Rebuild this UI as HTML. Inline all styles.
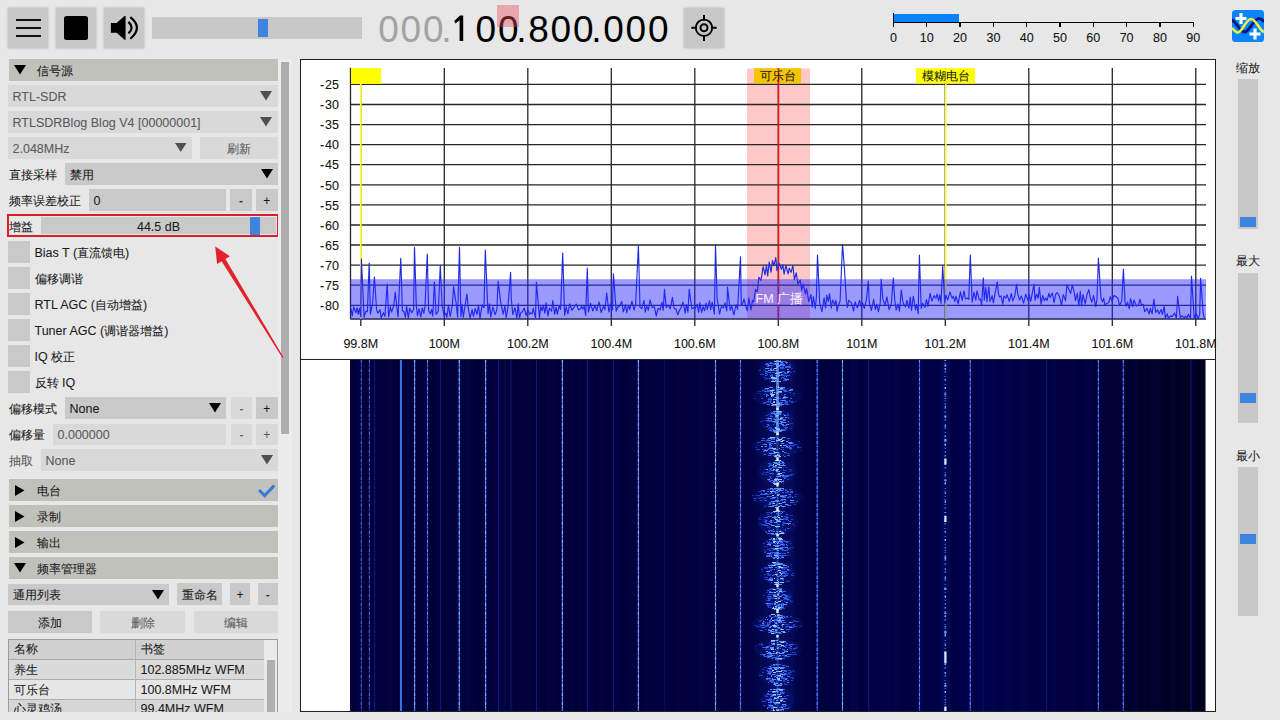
<!DOCTYPE html>
<html><head><meta charset="utf-8"><style>
html,body{margin:0;padding:0;width:1280px;height:720px;overflow:hidden;background:#e7e7e7;}
body{position:relative;font-family:"Liberation Sans",sans-serif;}
body>div,body>svg{position:absolute;}
.t{white-space:nowrap;line-height:15px;-webkit-text-stroke:0.08px currentColor;}
.c{font-size:12px;font-weight:500;}
.dg{top:9.5px;font-size:37px;line-height:40px;}
</style></head><body>
<div style="left:8px;top:8px;width:40px;height:40px;background:#c8c8c8;border-radius:2px;box-shadow:0 0 2px 1px #cfcfcf"></div><div style="left:56px;top:8px;width:40px;height:40px;background:#c8c8c8;border-radius:2px;box-shadow:0 0 2px 1px #cfcfcf"></div><div style="left:104px;top:8px;width:40px;height:40px;background:#c8c8c8;border-radius:2px;box-shadow:0 0 2px 1px #cfcfcf"></div><div style="left:15.5px;top:18.5px;width:25px;height:2px;background:#111;"></div><div style="left:15.5px;top:26.5px;width:25px;height:2px;background:#111;"></div><div style="left:15.5px;top:35px;width:25px;height:2px;background:#111;"></div><div style="left:64px;top:16px;width:24px;height:24px;background:#000;border-radius:2.5px"></div><svg style="left:104px;top:8px" width="40" height="40"><path d="M6.9 15.1H12.6L20.5 7.9H21.6V31.7H20.5L12.6 24.8H6.9Z" fill="#000"/><path d="M24.4 13.9Q30.8 19.6 24.4 25.4" stroke="#000" stroke-width="2.2" fill="none"/><path d="M26.3 9.2Q39.5 19.6 26.3 30.75" stroke="#000" stroke-width="2.2" fill="none"/></svg><div style="left:152px;top:17px;width:210px;height:21.5px;background:#c8c8c8;"></div><div style="left:258px;top:18.75px;width:10px;height:18.25px;background:#3d84de;"></div><div class="dg" style="left:378.2px;color:#a3a3a3">0</div><div class="dg" style="left:400.6px;color:#a3a3a3">0</div><div class="dg" style="left:423.0px;color:#a3a3a3">0</div><div class="dg" style="left:441.2px;color:#a3a3a3">.</div><svg style="left:450px;top:10px" width="20" height="36"><path d="M10 5.6H13.2V31H9.6V10.2L5.4 13.6L4.2 11.1Z" fill="#000"/></svg><div class="dg" style="left:475.6px;color:#000">0</div><div class="dg" style="left:498.0px;color:#000">0</div><div class="dg" style="left:516.2px;color:#000">.</div><div class="dg" style="left:528.2px;color:#000">8</div><div class="dg" style="left:550.6px;color:#000">0</div><div class="dg" style="left:573.0px;color:#000">0</div><div class="dg" style="left:591.2px;color:#000">.</div><div class="dg" style="left:603.2px;color:#000">0</div><div class="dg" style="left:625.6px;color:#000">0</div><div class="dg" style="left:648.0px;color:#000">0</div><div style="left:497px;top:5.1px;width:22px;height:21.5px;background:rgba(236,70,90,0.40);"></div><div style="left:684px;top:8px;width:40px;height:40px;background:#c8c8c8;border-radius:2px;box-shadow:0 0 2px 1px #cfcfcf"></div><svg style="left:684px;top:8px" width="40" height="40"><circle cx="20" cy="19.8" r="8.2" stroke="#000" stroke-width="1.9" fill="none"/><circle cx="20" cy="19.8" r="3.5" stroke="#000" stroke-width="2" fill="none"/><path d="M20 7V12.5M20 27.2V33M7.3 19.8H12.8M27.2 19.8H32.7" stroke="#000" stroke-width="2"/></svg><div style="left:893.4px;top:14px;width:65.6px;height:8px;background:#0a82ff;"></div><div style="left:893px;top:22px;width:300.5px;height:1.3px;background:#000;"></div><div style="left:892.8px;top:22px;width:1.3px;height:4.7px;background:#000;"></div><div class="t" style="left:863.4px;top:31px;width:60px;text-align:center;color:#111;font-size:12.5px">0</div><div style="left:926.12px;top:22px;width:1.3px;height:4.7px;background:#000;"></div><div class="t" style="left:896.7px;top:31px;width:60px;text-align:center;color:#111;font-size:12.5px">10</div><div style="left:959.4399999999999px;top:22px;width:1.3px;height:4.7px;background:#000;"></div><div class="t" style="left:930.0px;top:31px;width:60px;text-align:center;color:#111;font-size:12.5px">20</div><div style="left:992.76px;top:22px;width:1.3px;height:4.7px;background:#000;"></div><div class="t" style="left:963.4px;top:31px;width:60px;text-align:center;color:#111;font-size:12.5px">30</div><div style="left:1026.0800000000002px;top:22px;width:1.3px;height:4.7px;background:#000;"></div><div class="t" style="left:996.7px;top:31px;width:60px;text-align:center;color:#111;font-size:12.5px">40</div><div style="left:1059.4px;top:22px;width:1.3px;height:4.7px;background:#000;"></div><div class="t" style="left:1030.0px;top:31px;width:60px;text-align:center;color:#111;font-size:12.5px">50</div><div style="left:1092.72px;top:22px;width:1.3px;height:4.7px;background:#000;"></div><div class="t" style="left:1063.3px;top:31px;width:60px;text-align:center;color:#111;font-size:12.5px">60</div><div style="left:1126.04px;top:22px;width:1.3px;height:4.7px;background:#000;"></div><div class="t" style="left:1096.6px;top:31px;width:60px;text-align:center;color:#111;font-size:12.5px">70</div><div style="left:1159.3600000000001px;top:22px;width:1.3px;height:4.7px;background:#000;"></div><div class="t" style="left:1130.0px;top:31px;width:60px;text-align:center;color:#111;font-size:12.5px">80</div><div style="left:1192.68px;top:22px;width:1.3px;height:4.7px;background:#000;"></div><div class="t" style="left:1163.3px;top:31px;width:60px;text-align:center;color:#111;font-size:12.5px">90</div><div style="left:893px;top:13.4px;width:1.3px;height:9px;background:#000;"></div><svg style="left:1232px;top:10px" width="32" height="32"><rect width="32" height="32" rx="3.5" fill="#0a84ff"/><path d="M0 9.5C4 12 8 22 12.5 22C17 22 22 8.5 27 8.5C29.5 8.5 31 10.5 32 12" stroke="#071a7a" stroke-width="3" fill="none"/><path d="M0 18C2 20 4 22.5 6 22.5C10 22.5 14 9 19 9C24 9 27 20 32 22" stroke="#eeee44" stroke-width="2.6" fill="none"/><path d="M9 3V14M3.5 8.5H14.5M23 18.5V29.5M17.5 24H28.5" stroke="#fff" stroke-width="3.2"/></svg><div style="left:9px;top:59px;width:268.5px;height:22px;background:#c1c1bb;"></div><svg style="left:14px;top:65px" width="12" height="9.5"><path d="M0 0H12L6.0 9.5Z" fill="#000"/></svg><div class="t" style="left:37px;top:63.5px;color:#1b1b1b;font-size:12.5px;"><span class="c">信号源</span></div><div style="left:8px;top:85px;width:269.5px;height:22px;background:#d9d9d9;"></div><div class="t" style="left:12.5px;top:89.5px;color:#5a5a5a;font-size:12.5px;">RTL-SDR</div><svg style="left:260px;top:91px" width="12" height="9.5"><path d="M0 0H12L6.0 9.5Z" fill="#505050"/></svg><div style="left:8px;top:111px;width:269.5px;height:22px;background:#d9d9d9;"></div><div class="t" style="left:12.5px;top:115.5px;color:#5a5a5a;font-size:12.5px;">RTLSDRBlog Blog V4 [00000001]</div><svg style="left:260px;top:117px" width="12" height="9.5"><path d="M0 0H12L6.0 9.5Z" fill="#505050"/></svg><div style="left:8px;top:137px;width:184px;height:21.5px;background:#d9d9d9;"></div><div class="t" style="left:12.5px;top:141.5px;color:#5a5a5a;font-size:12.5px;">2.048MHz</div><svg style="left:175px;top:143px" width="11.5" height="9"><path d="M0 0H11.5L5.75 9Z" fill="#505050"/></svg><div style="left:200px;top:137px;width:77.5px;height:21.5px;background:#d9d9d9;"></div><div class="t" style="left:200px;top:141.5px;color:#5a5a5a;font-size:12.5px;width:77.5px;text-align:center"><span class="c">刷新</span></div><div class="t" style="left:9px;top:167.5px;color:#1b1b1b;font-size:12.5px;"><span class="c">直接采样</span></div><div style="left:65px;top:163px;width:212.5px;height:21.5px;background:#c9c9c9;"></div><div class="t" style="left:69.5px;top:167.5px;color:#1b1b1b;font-size:12.5px;"><span class="c">禁用</span></div><svg style="left:261px;top:169px" width="12" height="9.5"><path d="M0 0H12L6.0 9.5Z" fill="#000"/></svg><div class="t" style="left:9px;top:193.5px;color:#1b1b1b;font-size:12.5px;"><span class="c">频率误差校正</span></div><div style="left:89px;top:189px;width:137px;height:21.5px;background:#c9c9c9;"></div><div class="t" style="left:93.5px;top:193.5px;color:#1b1b1b;font-size:12.5px;">0</div><div style="left:230px;top:189px;width:22px;height:21.5px;background:#c9c9c9;"></div><div class="t" style="left:230px;top:193.5px;color:#1b1b1b;font-size:12px;width:22px;text-align:center">-</div><div style="left:256px;top:189px;width:21.5px;height:21.5px;background:#c9c9c9;"></div><div class="t" style="left:256px;top:193.5px;color:#1b1b1b;font-size:12px;width:21.5px;text-align:center">+</div><div style="left:41px;top:216.5px;width:235px;height:17px;background:#c9c9c9;"></div><div style="left:250px;top:216.9px;width:10px;height:18px;background:#3d84de;"></div><div class="t" style="left:41px;top:220.0px;color:#1b1b1b;font-size:12.5px;width:235px;text-align:center">44.5 dB</div><div class="t" style="left:8.5px;top:220.0px;color:#1b1b1b;font-size:12.5px;"><span class="c">增益</span></div><div style="left:7px;top:214px;width:268px;height:19px;border:2px solid #db1f2a"></div><div style="left:8px;top:241px;width:22px;height:22px;background:#c9c9c9;"></div><div class="t" style="left:34.5px;top:245.5px;color:#1b1b1b;font-size:12.5px;">Bias T (<span class="c">直流馈电</span>)</div><div style="left:8px;top:267px;width:22px;height:22px;background:#c9c9c9;"></div><div class="t" style="left:34.5px;top:271.5px;color:#1b1b1b;font-size:12.5px;"><span class="c">偏移调谐</span></div><div style="left:8px;top:293px;width:22px;height:22px;background:#c9c9c9;"></div><div class="t" style="left:34.5px;top:297.5px;color:#1b1b1b;font-size:12.5px;">RTL AGC (<span class="c">自动增益</span>)</div><div style="left:8px;top:319px;width:22px;height:22px;background:#c9c9c9;"></div><div class="t" style="left:34.5px;top:323.5px;color:#1b1b1b;font-size:12.5px;">Tuner AGC (<span class="c">调谐器增益</span>)</div><div style="left:8px;top:345px;width:22px;height:22px;background:#c9c9c9;"></div><div class="t" style="left:34.5px;top:349.5px;color:#1b1b1b;font-size:12.5px;">IQ <span class="c">校正</span></div><div style="left:8px;top:371px;width:22px;height:22px;background:#c9c9c9;"></div><div class="t" style="left:34.5px;top:375.5px;color:#1b1b1b;font-size:12.5px;"><span class="c">反转</span> IQ</div><div class="t" style="left:9px;top:401.5px;color:#1b1b1b;font-size:12.5px;"><span class="c">偏移模式</span></div><div style="left:65px;top:397px;width:161px;height:21.5px;background:#c9c9c9;"></div><div class="t" style="left:69.5px;top:401.5px;color:#1b1b1b;font-size:12.5px;">None</div><svg style="left:209px;top:403px" width="12" height="9.5"><path d="M0 0H12L6.0 9.5Z" fill="#000"/></svg><div style="left:231px;top:397px;width:21px;height:21.5px;background:#d9d9d9;"></div><div class="t" style="left:231px;top:401.5px;color:#5a5a5a;font-size:12px;width:21px;text-align:center">-</div><div style="left:256px;top:397px;width:21.5px;height:21.5px;background:#c9c9c9;"></div><div class="t" style="left:256px;top:401.5px;color:#1b1b1b;font-size:12px;width:21.5px;text-align:center">+</div><div class="t" style="left:9px;top:427.5px;color:#1b1b1b;font-size:12.5px;"><span class="c">偏移量</span></div><div style="left:53px;top:423.5px;width:173px;height:21px;background:#d9d9d9;"></div><div class="t" style="left:57.5px;top:428.0px;color:#5a5a5a;font-size:12.5px;">0.000000</div><div style="left:231px;top:423.5px;width:21px;height:21px;background:#d9d9d9;"></div><div class="t" style="left:231px;top:428.0px;color:#5a5a5a;font-size:12px;width:21px;text-align:center">-</div><div style="left:256px;top:423.5px;width:21.5px;height:21px;background:#d9d9d9;"></div><div class="t" style="left:256px;top:428.0px;color:#5a5a5a;font-size:12px;width:21.5px;text-align:center">+</div><div class="t" style="left:9px;top:453.5px;color:#5a5a5a;font-size:12.5px;"><span class="c">抽取</span></div><div style="left:41px;top:449.4px;width:236.5px;height:21.2px;background:#d9d9d9;"></div><div class="t" style="left:45.5px;top:453.5px;color:#5a5a5a;font-size:12.5px;">None</div><svg style="left:261px;top:455px" width="12" height="9.5"><path d="M0 0H12L6.0 9.5Z" fill="#505050"/></svg><div style="left:9px;top:479px;width:268.5px;height:22px;background:#c1c1bb;"></div><svg style="left:15px;top:484.5px" width="9.5" height="11"><path d="M0 0L9.5 5.5L0 11Z" fill="#000"/></svg><div class="t" style="left:37px;top:483.5px;color:#1b1b1b;font-size:12.5px;"><span class="c">电台</span></div><svg style="left:256px;top:483px" width="20" height="16"><path d="M3 7L8.6 12.6L18.3 2.5" stroke="#3a78d8" stroke-width="3" fill="none"/></svg><div style="left:9px;top:505px;width:268.5px;height:22px;background:#c1c1bb;"></div><svg style="left:15px;top:510.5px" width="9.5" height="11"><path d="M0 0L9.5 5.5L0 11Z" fill="#000"/></svg><div class="t" style="left:37px;top:509.5px;color:#1b1b1b;font-size:12.5px;"><span class="c">录制</span></div><div style="left:9px;top:531px;width:268.5px;height:22px;background:#c1c1bb;"></div><svg style="left:15px;top:536.5px" width="9.5" height="11"><path d="M0 0L9.5 5.5L0 11Z" fill="#000"/></svg><div class="t" style="left:37px;top:535.5px;color:#1b1b1b;font-size:12.5px;"><span class="c">输出</span></div><div style="left:9px;top:557px;width:268.5px;height:22px;background:#c1c1bb;"></div><svg style="left:14px;top:563px" width="12" height="9.5"><path d="M0 0H12L6.0 9.5Z" fill="#000"/></svg><div class="t" style="left:37px;top:561.5px;color:#1b1b1b;font-size:12.5px;"><span class="c">频率管理器</span></div><div style="left:8px;top:583.5px;width:160.75px;height:21px;background:#c9c9c9;"></div><div class="t" style="left:12.5px;top:588.0px;color:#1b1b1b;font-size:12.5px;"><span class="c">通用列表</span></div><svg style="left:152px;top:590px" width="12" height="9.5"><path d="M0 0H12L6.0 9.5Z" fill="#000"/></svg><div style="left:177px;top:583px;width:45px;height:21.5px;background:#c9c9c9;"></div><div class="t" style="left:177px;top:587.5px;color:#1b1b1b;font-size:12.5px;width:45px;text-align:center"><span class="c">重命名</span></div><div style="left:230px;top:583px;width:20px;height:21.5px;background:#c9c9c9;"></div><div class="t" style="left:230px;top:587.5px;color:#1b1b1b;font-size:12px;width:20px;text-align:center">+</div><div style="left:258px;top:583px;width:19.5px;height:21.5px;background:#c9c9c9;"></div><div class="t" style="left:258px;top:587.5px;color:#1b1b1b;font-size:12px;width:19.5px;text-align:center">-</div><div style="left:8px;top:611px;width:84px;height:21.5px;background:#c9c9c9;"></div><div class="t" style="left:8px;top:615.5px;color:#1b1b1b;font-size:12.5px;width:84px;text-align:center"><span class="c">添加</span></div><div style="left:100px;top:611px;width:85px;height:21.5px;background:#d9d9d9;"></div><div class="t" style="left:100px;top:615.5px;color:#5a5a5a;font-size:12.5px;width:85px;text-align:center"><span class="c">删除</span></div><div style="left:193.75px;top:611px;width:83.75px;height:21.5px;background:#d9d9d9;"></div><div class="t" style="left:193.75px;top:615.5px;color:#5a5a5a;font-size:12.5px;width:83.75px;text-align:center"><span class="c">编辑</span></div><div style="left:8px;top:639px;width:269.5px;height:73px;background:#e9e9e9;box-sizing:border-box;border:1px solid #9c9c9c;border-bottom:none"></div><div style="left:9px;top:640px;width:255px;height:19.5px;background:#d0d0d0;"></div><div style="left:9px;top:659.5px;width:255px;height:20px;background:#dadada;"></div><div style="left:9px;top:679.5px;width:255px;height:19.5px;background:#e6e6e6;"></div><div style="left:9px;top:699px;width:255px;height:13px;background:#d6d6d6;"></div><div style="left:9px;top:659.0px;width:255px;height:1px;background:#adadad;"></div><div style="left:9px;top:679.0px;width:255px;height:1px;background:#adadad;"></div><div style="left:9px;top:698.5px;width:255px;height:1px;background:#adadad;"></div><div style="left:134.5px;top:640px;width:1px;height:72px;background:#b5b5b5;"></div><div style="left:267px;top:660px;width:8px;height:52px;background:#b0b0b0;"></div><div class="t" style="left:14px;top:642.0px;color:#1b1b1b;font-size:12.5px;"><span class="c">名称</span></div><div class="t" style="left:140.5px;top:642.0px;color:#1b1b1b;font-size:12.5px;"><span class="c">书签</span></div><div class="t" style="left:14px;top:662.5px;color:#1b1b1b;font-size:12.5px;"><span class="c">养生</span></div><div class="t" style="left:140.5px;top:662.5px;color:#1b1b1b;font-size:12.5px;">102.885MHz WFM</div><div class="t" style="left:14px;top:682.5px;color:#1b1b1b;font-size:12.5px;"><span class="c">可乐台</span></div><div class="t" style="left:140.5px;top:682.5px;color:#1b1b1b;font-size:12.5px;">100.8MHz WFM</div><div class="t" style="left:14px;top:702.0px;color:#1b1b1b;font-size:12.5px;height:9.5px;overflow:hidden"><span class="c">心灵鸡汤</span></div><div class="t" style="left:140.5px;top:702.0px;color:#1b1b1b;font-size:12.5px;height:9.5px;overflow:hidden">99.4MHz WFM</div><div style="left:278px;top:59px;width:14px;height:653px;background:#ececec;"></div><div style="left:281px;top:62px;width:8px;height:372px;background:#aeaeae;"></div><svg style="left:0;top:0" width="300" height="380"><path d="M215.2 246.5L229.9 256.2L225.4 259.0L283.5 357.2L282.5 357.9L221.6 261.2L217.1 264.0Z" fill="#e4222b"/></svg><div style="left:300px;top:59px;width:914px;height:651px;border:1px solid #1e1e1e;background:#fff"></div><svg style="left:0;top:0" width="1280" height="720"><rect x="747" y="68.5" width="63" height="250.5" fill="#ffc8c8"/><path d="M350.5 84.4H1206M350.5 104.5H1206M350.5 124.6H1206M350.5 144.6H1206M350.5 164.7H1206M350.5 184.8H1206M350.5 204.9H1206M350.5 225.0H1206M350.5 245.0H1206M350.5 265.1H1206M350.5 285.2H1206M350.5 305.3H1206M360.8 68V326M444.3 68V326M527.8 68V326M611.3 68V326M694.8 68V326M778.3 68V326M861.8 68V326M945.3 68V326M1028.8 68V326M1112.3 68V326M1195.8 68V326M350.5 67.8V319.3M350.5 319H1206" stroke="#262626" stroke-width="1.3" fill="none"/><rect x="351.2" y="68" width="30" height="16" fill="#ffff00"/><path d="M360.8 84V319" stroke="#ffff30" stroke-width="1.8"/><path d="M945.8 83.4V319" stroke="#ffff30" stroke-width="1.6"/><path d="M778.5 68V319" stroke="#e41a1a" stroke-width="1.5"/><rect x="754" y="68.2" width="47" height="15.2" fill="#f7c400"/><rect x="916" y="68.2" width="59" height="15.2" fill="#ffff00"/><path d="M778.5 68V84" stroke="#e41a1a" stroke-width="1.5"/><polyline points="351.0,308.4 352.2,316.0 353.7,306.9 355.9,312.7 357.1,307.7 358.3,314.3 359.5,308.4 360.7,316.5 361.4,259.1 364.1,317.1 365.9,311.1 367.4,311.8 369.2,263.0 370.4,314.1 372.6,303.6 374.4,277.0 376.6,309.9 377.8,313.2 380.0,309.6 381.2,317.8 383.4,312.7 384.9,316.4 387.2,284.0 388.6,317.0 390.4,306.9 391.6,312.1 393.8,305.5 395.3,292.0 396.8,307.4 398.0,316.6 400.8,258.3 402.4,310.7 403.9,311.7 405.4,317.4 406.6,306.5 408.4,318.2 409.6,308.2 411.8,312.7 413.6,309.5 414.5,247.3 416.3,306.0 417.5,315.8 419.0,308.5 420.8,316.8 422.3,307.8 423.8,313.3 425.0,306.5 427.3,254.0 428.6,309.9 430.4,313.9 431.6,309.4 432.8,316.2 434.4,282.0 436.1,314.4 438.3,311.1 440.3,265.3 442.0,305.1 444.2,315.9 445.7,313.1 446.9,317.3 448.4,305.2 450.2,316.5 452.4,304.6 453.6,286.9 456.1,303.1 457.6,317.2 459.5,247.3 460.9,316.8 462.1,304.2 463.3,317.3 464.5,309.4 466.9,294.0 468.2,307.5 470.0,318.2 472.2,309.6 473.4,316.3 475.2,308.3 477.0,314.5 478.5,305.3 480.0,318.2 482.2,304.9 484.0,307.7 485.3,250.0 488.0,313.7 489.5,303.8 490.7,316.9 492.9,306.9 495.1,314.7 496.9,309.6 498.1,281.0 500.9,303.7 503.1,314.1 504.9,305.9 506.1,317.6 507.9,307.8 510.6,272.3 511.3,298.7 512.8,314.5 515.0,307.7 516.8,318.2 518.3,303.9 519.5,317.8 520.7,312.8 522.5,311.7 524.3,308.0 526.1,315.5 527.9,310.1 529.7,314.2 530.9,312.7 532.1,313.9 533.3,308.1 535.5,318.1 536.4,282.2 539.5,318.2 540.7,306.7 542.2,310.7 543.4,305.1 544.9,313.3 546.1,302.8 547.9,315.9 549.4,308.0 551.6,311.2 552.8,300.5 554.6,314.2 556.1,307.2 557.3,314.4 559.1,305.7 560.6,309.5 562.7,253.1 564.6,315.3 566.1,306.9 567.9,314.0 569.7,303.8 571.9,310.3 574.1,307.2 576.3,304.0 578.5,309.9 580.3,309.0 581.5,306.3 582.7,309.1 584.2,306.4 585.7,315.4 587.3,268.1 588.4,312.1 590.6,303.4 592.8,311.0 595.0,305.3 596.8,310.7 599.0,301.8 601.2,312.6 603.4,306.3 604.9,309.7 606.7,293.1 608.9,311.9 610.7,303.9 612.5,309.9 613.4,273.9 616.2,311.2 617.4,307.8 619.6,306.0 621.8,301.4 623.3,311.9 625.5,304.8 626.7,312.6 628.5,305.2 629.7,309.6 631.9,301.2 634.1,310.2 635.6,304.7 638.4,245.8 640.0,307.4 641.8,308.7 644.0,300.4 645.2,312.3 646.7,306.3 648.5,310.2 650.0,299.8 652.2,307.5 654.4,306.9 656.2,316.0 658.0,308.3 660.2,309.9 662.0,302.1 663.2,310.3 664.5,289.2 666.2,307.5 668.0,305.1 670.2,308.8 672.4,297.3 674.2,308.6 676.0,309.0 677.8,314.8 679.6,310.0 680.8,308.1 683.0,302.1 685.2,313.1 686.4,304.5 687.9,312.4 689.2,289.2 691.9,308.9 693.7,307.6 694.9,309.1 697.1,304.2 698.6,312.3 699.8,302.9 701.6,312.5 703.1,306.7 704.6,310.8 706.1,303.0 707.3,309.6 709.5,300.9 710.7,309.7 712.2,302.2 714.4,314.2 715.5,245.0 717.1,298.6 718.3,305.5 719.5,314.2 721.3,306.6 723.5,307.8 725.0,303.0 726.8,310.9 727.5,287.2 730.2,310.2 731.7,306.0 733.9,314.8 736.1,304.5 737.6,309.3 740.5,256.9 741.3,305.1 742.5,304.2 744.0,298.9 745.8,306.3 747.3,310.8 748.8,298.1 751.0,310.0 752.5,300.3 753.7,301.8 755.5,289.6 757.3,291.7 758.8,277.4 761.0,280.3 763.2,266.6 765.0,274.9 766.5,265.2 767.7,276.0 769.2,262.0 771.0,272.3 772.5,260.6 774.0,265.8 775.8,257.7 777.0,270.7 779.2,263.3 781.4,269.2 782.9,264.7 784.1,274.1 785.9,265.4 788.1,273.8 789.3,268.1 791.1,272.4 792.9,265.7 794.4,279.6 796.2,272.9 798.0,284.1 800.2,279.9 801.7,290.2 803.2,283.8 805.4,293.9 806.6,288.7 808.8,301.7 811.0,294.6 812.2,307.3 813.4,296.7 815.2,308.7 816.4,297.1 817.5,255.0 819.7,303.2 821.9,311.7 824.1,297.8 825.6,308.1 826.8,295.2 828.3,301.7 829.5,293.7 831.3,308.2 832.5,300.0 834.7,304.6 835.9,300.2 837.1,311.1 838.3,305.3 840.1,301.3 842.5,244.4 844.4,267.8 846.3,299.9 847.5,307.5 848.7,300.2 850.2,301.9 851.4,302.8 853.6,310.9 855.1,301.9 857.3,307.9 859.5,300.4 861.3,307.0 862.5,302.7 864.3,308.4 866.5,298.8 868.3,281.1 869.2,301.9 871.4,310.5 873.6,299.3 875.4,309.7 876.9,304.2 878.4,311.8 880.2,303.2 881.2,279.2 882.9,299.5 885.1,305.3 886.9,296.8 889.1,309.7 891.3,303.9 893.3,278.0 894.7,299.9 896.2,310.2 898.0,304.0 899.5,311.2 901.3,290.0 902.8,301.4 904.0,304.9 905.5,306.9 907.0,300.2 908.8,308.2 910.3,297.0 911.5,310.4 913.3,296.2 915.5,310.0 916.7,304.4 918.2,313.6 919.4,255.0 921.2,308.4 922.7,303.2 924.9,307.4 926.4,299.6 927.9,306.3 930.1,293.3 931.9,301.1 934.1,295.6 935.9,298.3 937.1,294.0 938.6,301.0 939.8,294.9 941.0,303.4 942.7,265.5 944.7,302.9 945.9,295.0 947.7,300.1 949.9,291.9 952.1,298.1 953.3,296.3 954.8,301.5 956.0,296.2 958.2,303.9 960.4,291.9 962.2,300.4 964.0,290.9 965.5,299.1 967.3,298.0 968.8,299.3 970.3,255.0 972.2,302.2 974.0,292.0 975.8,300.2 977.0,290.8 979.2,299.9 980.4,299.0 981.6,305.0 983.3,278.0 984.3,300.1 985.8,287.4 987.0,301.8 988.8,286.8 990.0,301.5 992.2,295.8 993.4,303.0 994.9,294.4 997.3,281.9 998.3,292.7 999.5,296.9 1001.0,295.9 1002.8,304.1 1004.0,296.2 1005.8,298.1 1007.0,294.6 1009.2,301.4 1011.4,293.5 1012.6,301.0 1014.8,295.9 1016.6,284.2 1017.8,294.4 1019.6,299.9 1021.4,295.9 1023.6,303.1 1025.8,294.1 1028.0,300.8 1029.2,294.6 1030.7,301.3 1034.0,284.2 1035.1,300.4 1036.6,294.1 1038.1,298.3 1039.3,287.4 1041.1,304.1 1042.6,295.5 1044.4,300.7 1045.9,298.0 1047.1,300.4 1048.9,293.3 1050.1,297.5 1052.3,292.9 1054.1,302.7 1055.6,294.4 1057.1,292.5 1059.3,296.1 1061.5,305.1 1063.3,294.7 1065.5,300.6 1067.0,284.6 1068.8,289.1 1070.6,293.5 1072.3,285.0 1074.3,292.7 1075.5,300.7 1077.3,293.4 1078.8,305.8 1080.3,291.2 1081.5,305.8 1083.0,294.5 1085.2,304.2 1087.0,294.7 1088.8,289.6 1090.3,297.6 1091.8,302.1 1093.6,295.6 1095.8,306.6 1097.0,298.9 1098.4,258.2 1101.0,298.1 1102.5,301.8 1103.7,298.3 1104.9,305.0 1107.1,303.3 1108.6,302.6 1110.4,296.7 1111.9,301.1 1114.1,295.5 1115.6,296.4 1117.8,297.9 1119.6,305.6 1121.8,301.0 1123.4,269.2 1125.1,302.6 1126.3,306.2 1127.5,302.0 1129.3,308.8 1130.5,298.6 1132.7,306.6 1133.9,300.1 1135.4,303.6 1136.6,305.9 1138.4,305.5 1139.9,299.2 1141.4,304.9 1143.2,304.4 1144.7,311.7 1146.9,308.2 1149.1,313.9 1150.3,308.3 1152.1,313.9 1153.9,299.2 1155.7,312.5 1157.5,309.8 1159.0,313.8 1161.2,309.6 1162.4,314.3 1164.2,306.5 1165.4,317.9 1167.2,313.8 1168.4,318.2 1170.2,316.1 1172.4,316.4 1174.6,313.0 1176.4,318.2 1177.6,296.2 1180.4,318.2 1181.9,315.5 1184.1,318.2 1185.6,316.1 1187.1,318.2 1188.3,314.3 1190.5,318.2 1191.5,276.2 1194.2,318.2 1196.0,313.5 1198.2,318.2 1199.7,314.6 1200.6,278.3 1203.1,312.3 1204.3,318.2" stroke="#1e2ae0" stroke-width="1.15" fill="none" stroke-linejoin="round"/><rect x="350.5" y="279.2" width="855.5" height="39.8" fill="rgba(40,40,255,0.47)"/><path d="M300.5 359.5H1215" stroke="#1e1e1e" stroke-width="1.2"/></svg><div class="t" style="left:299px;top:78.1px;width:40px;text-align:right;color:#111;font-size:12.5px"><span style="letter-spacing:1px">-</span>25</div><div class="t" style="left:299px;top:98.2px;width:40px;text-align:right;color:#111;font-size:12.5px"><span style="letter-spacing:1px">-</span>30</div><div class="t" style="left:299px;top:118.3px;width:40px;text-align:right;color:#111;font-size:12.5px"><span style="letter-spacing:1px">-</span>35</div><div class="t" style="left:299px;top:138.3px;width:40px;text-align:right;color:#111;font-size:12.5px"><span style="letter-spacing:1px">-</span>40</div><div class="t" style="left:299px;top:158.4px;width:40px;text-align:right;color:#111;font-size:12.5px"><span style="letter-spacing:1px">-</span>45</div><div class="t" style="left:299px;top:178.5px;width:40px;text-align:right;color:#111;font-size:12.5px"><span style="letter-spacing:1px">-</span>50</div><div class="t" style="left:299px;top:198.6px;width:40px;text-align:right;color:#111;font-size:12.5px"><span style="letter-spacing:1px">-</span>55</div><div class="t" style="left:299px;top:218.7px;width:40px;text-align:right;color:#111;font-size:12.5px"><span style="letter-spacing:1px">-</span>60</div><div class="t" style="left:299px;top:238.7px;width:40px;text-align:right;color:#111;font-size:12.5px"><span style="letter-spacing:1px">-</span>65</div><div class="t" style="left:299px;top:258.8px;width:40px;text-align:right;color:#111;font-size:12.5px"><span style="letter-spacing:1px">-</span>70</div><div class="t" style="left:299px;top:278.9px;width:40px;text-align:right;color:#111;font-size:12.5px"><span style="letter-spacing:1px">-</span>75</div><div class="t" style="left:299px;top:299.0px;width:40px;text-align:right;color:#111;font-size:12.5px"><span style="letter-spacing:1px">-</span>80</div><div class="t" style="left:320.8px;top:337px;width:80px;text-align:center;color:#111;font-size:12.5px">99.8M</div><div class="t" style="left:404.3px;top:337px;width:80px;text-align:center;color:#111;font-size:12.5px">100M</div><div class="t" style="left:487.8px;top:337px;width:80px;text-align:center;color:#111;font-size:12.5px">100.2M</div><div class="t" style="left:571.3px;top:337px;width:80px;text-align:center;color:#111;font-size:12.5px">100.4M</div><div class="t" style="left:654.8px;top:337px;width:80px;text-align:center;color:#111;font-size:12.5px">100.6M</div><div class="t" style="left:738.3px;top:337px;width:80px;text-align:center;color:#111;font-size:12.5px">100.8M</div><div class="t" style="left:821.8px;top:337px;width:80px;text-align:center;color:#111;font-size:12.5px">101M</div><div class="t" style="left:905.3px;top:337px;width:80px;text-align:center;color:#111;font-size:12.5px">101.2M</div><div class="t" style="left:988.8px;top:337px;width:80px;text-align:center;color:#111;font-size:12.5px">101.4M</div><div class="t" style="left:1072.3px;top:337px;width:80px;text-align:center;color:#111;font-size:12.5px">101.6M</div><div class="t" style="left:1155.8px;top:337px;width:80px;text-align:center;color:#111;font-size:12.5px">101.8M</div><div class="t" style="left:754px;top:68.5px;width:47px;text-align:center;color:#222;font-size:12px">可乐台</div><div class="t" style="left:916px;top:68.5px;width:59px;text-align:center;color:#222;font-size:12px">模糊电台</div><div class="t" style="left:755.5px;top:291.5px;color:#f4f0ff;font-size:12.5px">FM 广播</div><svg style="left:350px;top:360px" width="855.5" height="351"><defs><linearGradient id="wg" x1="0" x2="1" y1="0" y2="0"><stop offset="0" stop-color="#000036"/><stop offset="0.35" stop-color="#00003a"/><stop offset="0.55" stop-color="#00003e"/><stop offset="0.76" stop-color="#000046"/><stop offset="0.87" stop-color="#00003c"/><stop offset="0.93" stop-color="#000026"/><stop offset="1" stop-color="#00001c"/></linearGradient></defs><rect width="855.5" height="351" fill="url(#wg)"/><rect x="0.0" width="3.5" height="351" fill="rgba(30,40,200,0.027)"/><rect x="3.5" width="4.8" height="351" fill="rgba(30,40,200,0.027)"/><rect x="8.2" width="3.6" height="351" fill="rgba(30,40,200,0.055)"/><rect x="11.9" width="6.2" height="351" fill="rgba(30,40,200,0.035)"/><rect x="18.1" width="4.2" height="351" fill="rgba(30,40,200,0.013)"/><rect x="22.3" width="3.5" height="351" fill="rgba(30,40,200,0.010)"/><rect x="25.8" width="4.9" height="351" fill="rgba(30,40,200,0.041)"/><rect x="30.7" width="2.4" height="351" fill="rgba(30,40,200,0.064)"/><rect x="33.2" width="3.6" height="351" fill="rgba(30,40,200,0.059)"/><rect x="36.8" width="6.2" height="351" fill="rgba(30,40,200,0.067)"/><rect x="43.0" width="3.0" height="351" fill="rgba(30,40,200,0.030)"/><rect x="46.0" width="6.6" height="351" fill="rgba(30,40,200,0.001)"/><rect x="52.5" width="2.2" height="351" fill="rgba(30,40,200,0.040)"/><rect x="54.8" width="4.5" height="351" fill="rgba(30,40,200,0.064)"/><rect x="59.3" width="5.9" height="351" fill="rgba(30,40,200,0.038)"/><rect x="65.1" width="7.0" height="351" fill="rgba(30,40,200,0.036)"/><rect x="72.1" width="4.6" height="351" fill="rgba(30,40,200,0.048)"/><rect x="76.7" width="3.9" height="351" fill="rgba(30,40,200,0.025)"/><rect x="80.7" width="5.0" height="351" fill="rgba(30,40,200,0.025)"/><rect x="85.6" width="6.7" height="351" fill="rgba(30,40,200,0.047)"/><rect x="92.4" width="4.6" height="351" fill="rgba(30,40,200,0.007)"/><rect x="97.0" width="3.9" height="351" fill="rgba(30,40,200,0.028)"/><rect x="100.9" width="4.8" height="351" fill="rgba(30,40,200,0.040)"/><rect x="105.7" width="6.4" height="351" fill="rgba(30,40,200,0.068)"/><rect x="112.1" width="4.4" height="351" fill="rgba(30,40,200,0.031)"/><rect x="116.5" width="5.1" height="351" fill="rgba(30,40,200,0.070)"/><rect x="121.6" width="3.7" height="351" fill="rgba(30,40,200,0.037)"/><rect x="125.3" width="6.1" height="351" fill="rgba(30,40,200,0.012)"/><rect x="131.4" width="3.6" height="351" fill="rgba(30,40,200,0.068)"/><rect x="135.0" width="6.1" height="351" fill="rgba(30,40,200,0.036)"/><rect x="141.1" width="2.6" height="351" fill="rgba(30,40,200,0.063)"/><rect x="143.7" width="5.4" height="351" fill="rgba(30,40,200,0.057)"/><rect x="149.1" width="7.0" height="351" fill="rgba(30,40,200,0.062)"/><rect x="156.1" width="4.1" height="351" fill="rgba(30,40,200,0.011)"/><rect x="160.2" width="3.4" height="351" fill="rgba(30,40,200,0.036)"/><rect x="163.7" width="4.5" height="351" fill="rgba(30,40,200,0.013)"/><rect x="168.2" width="2.9" height="351" fill="rgba(30,40,200,0.044)"/><rect x="171.1" width="5.0" height="351" fill="rgba(30,40,200,0.025)"/><rect x="176.1" width="7.0" height="351" fill="rgba(30,40,200,0.045)"/><rect x="183.1" width="2.2" height="351" fill="rgba(30,40,200,0.029)"/><rect x="185.3" width="5.9" height="351" fill="rgba(30,40,200,0.021)"/><rect x="191.2" width="5.5" height="351" fill="rgba(30,40,200,0.000)"/><rect x="196.7" width="3.5" height="351" fill="rgba(30,40,200,0.059)"/><rect x="200.2" width="4.9" height="351" fill="rgba(30,40,200,0.047)"/><rect x="205.1" width="3.0" height="351" fill="rgba(30,40,200,0.035)"/><rect x="208.1" width="4.8" height="351" fill="rgba(30,40,200,0.019)"/><rect x="212.9" width="5.2" height="351" fill="rgba(30,40,200,0.037)"/><rect x="218.1" width="7.0" height="351" fill="rgba(30,40,200,0.040)"/><rect x="225.1" width="4.1" height="351" fill="rgba(30,40,200,0.009)"/><rect x="229.2" width="2.8" height="351" fill="rgba(30,40,200,0.053)"/><rect x="231.9" width="2.5" height="351" fill="rgba(30,40,200,0.007)"/><rect x="234.5" width="2.9" height="351" fill="rgba(30,40,200,0.037)"/><rect x="237.3" width="6.1" height="351" fill="rgba(30,40,200,0.043)"/><rect x="243.4" width="6.0" height="351" fill="rgba(30,40,200,0.004)"/><rect x="249.5" width="2.1" height="351" fill="rgba(30,40,200,0.054)"/><rect x="251.5" width="3.6" height="351" fill="rgba(30,40,200,0.050)"/><rect x="255.2" width="3.8" height="351" fill="rgba(30,40,200,0.012)"/><rect x="258.9" width="3.3" height="351" fill="rgba(30,40,200,0.007)"/><rect x="262.3" width="6.5" height="351" fill="rgba(30,40,200,0.041)"/><rect x="268.8" width="3.7" height="351" fill="rgba(30,40,200,0.031)"/><rect x="272.5" width="3.9" height="351" fill="rgba(30,40,200,0.004)"/><rect x="276.4" width="6.5" height="351" fill="rgba(30,40,200,0.041)"/><rect x="282.9" width="6.8" height="351" fill="rgba(30,40,200,0.031)"/><rect x="289.7" width="5.1" height="351" fill="rgba(30,40,200,0.017)"/><rect x="294.8" width="2.2" height="351" fill="rgba(30,40,200,0.065)"/><rect x="297.0" width="6.3" height="351" fill="rgba(30,40,200,0.022)"/><rect x="303.3" width="6.5" height="351" fill="rgba(30,40,200,0.057)"/><rect x="309.8" width="3.5" height="351" fill="rgba(30,40,200,0.042)"/><rect x="313.3" width="6.8" height="351" fill="rgba(30,40,200,0.035)"/><rect x="320.1" width="6.7" height="351" fill="rgba(30,40,200,0.017)"/><rect x="326.9" width="3.9" height="351" fill="rgba(30,40,200,0.050)"/><rect x="330.8" width="3.1" height="351" fill="rgba(30,40,200,0.022)"/><rect x="333.9" width="6.4" height="351" fill="rgba(30,40,200,0.034)"/><rect x="340.3" width="6.0" height="351" fill="rgba(30,40,200,0.017)"/><rect x="346.2" width="2.9" height="351" fill="rgba(30,40,200,0.025)"/><rect x="349.1" width="2.9" height="351" fill="rgba(30,40,200,0.068)"/><rect x="352.0" width="3.5" height="351" fill="rgba(30,40,200,0.039)"/><rect x="355.5" width="2.6" height="351" fill="rgba(30,40,200,0.037)"/><rect x="358.1" width="3.9" height="351" fill="rgba(30,40,200,0.028)"/><rect x="362.0" width="2.3" height="351" fill="rgba(30,40,200,0.009)"/><rect x="364.3" width="6.1" height="351" fill="rgba(30,40,200,0.025)"/><rect x="370.5" width="3.2" height="351" fill="rgba(30,40,200,0.013)"/><rect x="373.7" width="3.4" height="351" fill="rgba(30,40,200,0.017)"/><rect x="377.1" width="2.2" height="351" fill="rgba(30,40,200,0.046)"/><rect x="379.3" width="3.7" height="351" fill="rgba(30,40,200,0.011)"/><rect x="383.0" width="5.5" height="351" fill="rgba(30,40,200,0.006)"/><rect x="388.5" width="3.3" height="351" fill="rgba(30,40,200,0.058)"/><rect x="391.9" width="2.6" height="351" fill="rgba(30,40,200,0.031)"/><rect x="394.5" width="6.2" height="351" fill="rgba(30,40,200,0.056)"/><rect x="400.7" width="2.8" height="351" fill="rgba(30,40,200,0.025)"/><rect x="403.5" width="5.6" height="351" fill="rgba(30,40,200,0.026)"/><rect x="409.1" width="6.8" height="351" fill="rgba(30,40,200,0.015)"/><rect x="415.9" width="6.8" height="351" fill="rgba(30,40,200,0.035)"/><rect x="422.6" width="3.1" height="351" fill="rgba(30,40,200,0.032)"/><rect x="425.8" width="2.7" height="351" fill="rgba(30,40,200,0.049)"/><rect x="428.4" width="3.3" height="351" fill="rgba(30,40,200,0.063)"/><rect x="431.7" width="4.9" height="351" fill="rgba(30,40,200,0.026)"/><rect x="436.7" width="3.2" height="351" fill="rgba(30,40,200,0.043)"/><rect x="439.9" width="3.1" height="351" fill="rgba(30,40,200,0.061)"/><rect x="443.0" width="2.6" height="351" fill="rgba(30,40,200,0.036)"/><rect x="445.6" width="4.7" height="351" fill="rgba(30,40,200,0.019)"/><rect x="450.3" width="5.9" height="351" fill="rgba(30,40,200,0.027)"/><rect x="456.2" width="5.3" height="351" fill="rgba(30,40,200,0.040)"/><rect x="461.4" width="3.6" height="351" fill="rgba(30,40,200,0.027)"/><rect x="465.0" width="2.4" height="351" fill="rgba(30,40,200,0.012)"/><rect x="467.4" width="6.3" height="351" fill="rgba(30,40,200,0.022)"/><rect x="473.7" width="5.3" height="351" fill="rgba(30,40,200,0.008)"/><rect x="479.0" width="4.8" height="351" fill="rgba(30,40,200,0.025)"/><rect x="483.8" width="4.5" height="351" fill="rgba(30,40,200,0.021)"/><rect x="488.3" width="2.3" height="351" fill="rgba(30,40,200,0.022)"/><rect x="490.6" width="3.1" height="351" fill="rgba(30,40,200,0.009)"/><rect x="493.8" width="5.6" height="351" fill="rgba(30,40,200,0.020)"/><rect x="499.3" width="4.0" height="351" fill="rgba(30,40,200,0.064)"/><rect x="503.4" width="5.9" height="351" fill="rgba(30,40,200,0.062)"/><rect x="509.2" width="6.3" height="351" fill="rgba(30,40,200,0.009)"/><rect x="515.5" width="3.4" height="351" fill="rgba(30,40,200,0.002)"/><rect x="518.9" width="5.4" height="351" fill="rgba(30,40,200,0.046)"/><rect x="524.3" width="3.8" height="351" fill="rgba(30,40,200,0.029)"/><rect x="528.1" width="5.3" height="351" fill="rgba(30,40,200,0.049)"/><rect x="533.4" width="3.2" height="351" fill="rgba(30,40,200,0.059)"/><rect x="536.6" width="3.8" height="351" fill="rgba(30,40,200,0.044)"/><rect x="540.4" width="2.9" height="351" fill="rgba(30,40,200,0.008)"/><rect x="543.3" width="6.6" height="351" fill="rgba(30,40,200,0.051)"/><rect x="549.9" width="5.6" height="351" fill="rgba(30,40,200,0.003)"/><rect x="555.4" width="2.2" height="351" fill="rgba(30,40,200,0.011)"/><rect x="557.6" width="3.0" height="351" fill="rgba(30,40,200,0.021)"/><rect x="560.6" width="3.9" height="351" fill="rgba(30,40,200,0.003)"/><rect x="564.5" width="3.6" height="351" fill="rgba(30,40,200,0.045)"/><rect x="568.1" width="2.9" height="351" fill="rgba(30,40,200,0.059)"/><rect x="571.0" width="4.9" height="351" fill="rgba(30,40,200,0.050)"/><rect x="575.8" width="3.3" height="351" fill="rgba(30,40,200,0.030)"/><rect x="579.1" width="5.4" height="351" fill="rgba(30,40,200,0.024)"/><rect x="584.5" width="2.0" height="351" fill="rgba(30,40,200,0.058)"/><rect x="586.5" width="5.9" height="351" fill="rgba(30,40,200,0.020)"/><rect x="592.4" width="2.2" height="351" fill="rgba(30,40,200,0.060)"/><rect x="594.6" width="5.0" height="351" fill="rgba(30,40,200,0.003)"/><rect x="599.7" width="3.2" height="351" fill="rgba(30,40,200,0.008)"/><rect x="602.9" width="6.0" height="351" fill="rgba(30,40,200,0.015)"/><rect x="608.8" width="6.6" height="351" fill="rgba(30,40,200,0.052)"/><rect x="615.4" width="2.4" height="351" fill="rgba(30,40,200,0.049)"/><rect x="617.8" width="4.0" height="351" fill="rgba(30,40,200,0.052)"/><rect x="621.8" width="6.1" height="351" fill="rgba(30,40,200,0.020)"/><rect x="627.9" width="2.4" height="351" fill="rgba(30,40,200,0.066)"/><rect x="630.4" width="4.1" height="351" fill="rgba(30,40,200,0.065)"/><rect x="634.5" width="5.5" height="351" fill="rgba(30,40,200,0.052)"/><rect x="640.0" width="6.1" height="351" fill="rgba(30,40,200,0.044)"/><rect x="646.1" width="4.3" height="351" fill="rgba(30,40,200,0.004)"/><rect x="650.4" width="5.5" height="351" fill="rgba(30,40,200,0.030)"/><rect x="655.9" width="4.6" height="351" fill="rgba(30,40,200,0.065)"/><rect x="660.4" width="2.6" height="351" fill="rgba(30,40,200,0.053)"/><rect x="663.1" width="2.2" height="351" fill="rgba(30,40,200,0.049)"/><rect x="665.3" width="6.0" height="351" fill="rgba(30,40,200,0.018)"/><rect x="671.3" width="4.7" height="351" fill="rgba(30,40,200,0.068)"/><rect x="676.1" width="5.2" height="351" fill="rgba(30,40,200,0.038)"/><rect x="681.2" width="3.2" height="351" fill="rgba(30,40,200,0.004)"/><rect x="684.5" width="3.8" height="351" fill="rgba(30,40,200,0.029)"/><rect x="688.3" width="3.0" height="351" fill="rgba(30,40,200,0.022)"/><rect x="691.3" width="2.7" height="351" fill="rgba(30,40,200,0.049)"/><rect x="694.0" width="5.4" height="351" fill="rgba(30,40,200,0.017)"/><rect x="699.3" width="3.2" height="351" fill="rgba(30,40,200,0.036)"/><rect x="702.5" width="4.2" height="351" fill="rgba(30,40,200,0.066)"/><rect x="706.8" width="3.8" height="351" fill="rgba(30,40,200,0.021)"/><rect x="710.5" width="6.4" height="351" fill="rgba(30,40,200,0.010)"/><rect x="716.9" width="4.8" height="351" fill="rgba(30,40,200,0.023)"/><rect x="721.8" width="6.1" height="351" fill="rgba(30,40,200,0.038)"/><rect x="727.8" width="5.8" height="351" fill="rgba(30,40,200,0.012)"/><rect x="733.6" width="5.3" height="351" fill="rgba(30,40,200,0.042)"/><rect x="739.0" width="4.3" height="351" fill="rgba(30,40,200,0.054)"/><rect x="743.3" width="6.2" height="351" fill="rgba(30,40,200,0.008)"/><rect x="749.4" width="3.4" height="351" fill="rgba(30,40,200,0.025)"/><rect x="752.9" width="3.0" height="351" fill="rgba(30,40,200,0.004)"/><rect x="755.9" width="3.4" height="351" fill="rgba(30,40,200,0.014)"/><rect x="759.3" width="5.5" height="351" fill="rgba(30,40,200,0.031)"/><rect x="764.8" width="2.6" height="351" fill="rgba(30,40,200,0.023)"/><rect x="767.4" width="4.3" height="351" fill="rgba(30,40,200,0.025)"/><rect x="771.7" width="2.8" height="351" fill="rgba(30,40,200,0.005)"/><rect x="774.6" width="2.1" height="351" fill="rgba(30,40,200,0.069)"/><rect x="776.6" width="5.8" height="351" fill="rgba(30,40,200,0.006)"/><rect x="782.4" width="5.6" height="351" fill="rgba(30,40,200,0.069)"/><rect x="788.0" width="4.8" height="351" fill="rgba(30,40,200,0.008)"/><rect x="792.8" width="4.4" height="351" fill="rgba(30,40,200,0.030)"/><rect x="797.2" width="2.9" height="351" fill="rgba(30,40,200,0.038)"/><rect x="800.2" width="2.0" height="351" fill="rgba(30,40,200,0.064)"/><rect x="802.2" width="5.2" height="351" fill="rgba(30,40,200,0.044)"/><rect x="807.4" width="6.7" height="351" fill="rgba(30,40,200,0.046)"/><rect x="814.1" width="3.3" height="351" fill="rgba(30,40,200,0.017)"/><rect x="817.4" width="2.7" height="351" fill="rgba(30,40,200,0.002)"/><rect x="820.1" width="5.9" height="351" fill="rgba(30,40,200,0.059)"/><rect x="825.9" width="3.5" height="351" fill="rgba(30,40,200,0.013)"/><rect x="829.4" width="5.2" height="351" fill="rgba(30,40,200,0.059)"/><rect x="834.6" width="6.6" height="351" fill="rgba(30,40,200,0.012)"/><rect x="841.2" width="5.9" height="351" fill="rgba(30,40,200,0.058)"/><rect x="847.2" width="5.7" height="351" fill="rgba(30,40,200,0.023)"/><rect x="852.9" width="2.9" height="351" fill="rgba(30,40,200,0.058)"/><rect x="10.8" width="1.1" height="351" fill="#1a30b8" opacity="0.9"/><path d="M11.3 0V351" stroke="#6088f0" stroke-width="1" stroke-dasharray="3 2 1 3" opacity="0.75"/><rect x="18.8" width="1.1" height="351" fill="#1a30b8" opacity="0.9"/><path d="M19.4 0V351" stroke="#6088f0" stroke-width="1" stroke-dasharray="3 2 1 3" opacity="0.75"/><rect x="24.1" width="1.0" height="351" fill="#1624a0" opacity="0.75"/><rect x="49.9" width="2.0" height="351" fill="#2f7af0" opacity="1"/><rect x="64.0" width="1.2" height="351" fill="#4a7ae8" opacity="1"/><path d="M64.6 0V351" stroke="#b0c8ff" stroke-width="1" stroke-dasharray="3 2 1 3" opacity="0.75"/><rect x="76.9" width="1.2" height="351" fill="#2a4ad8" opacity="1"/><path d="M77.5 0V351" stroke="#80a8ff" stroke-width="1" stroke-dasharray="3 2 1 3" opacity="0.75"/><rect x="89.9" width="1.0" height="351" fill="#1624a0" opacity="0.75"/><rect x="108.7" width="1.2" height="351" fill="#4a7ae8" opacity="1"/><path d="M109.3 0V351" stroke="#b0c8ff" stroke-width="1" stroke-dasharray="3 2 1 3" opacity="0.75"/><rect x="135.0" width="1.2" height="351" fill="#4a7ae8" opacity="1"/><path d="M135.6 0V351" stroke="#b0c8ff" stroke-width="1" stroke-dasharray="3 2 1 3" opacity="0.75"/><rect x="148.0" width="1.0" height="351" fill="#1624a0" opacity="0.75"/><rect x="160.4" width="1.0" height="351" fill="#1624a0" opacity="0.75"/><rect x="186.1" width="1.0" height="351" fill="#1624a0" opacity="0.75"/><rect x="211.8" width="1.2" height="351" fill="#4a7ae8" opacity="1"/><path d="M212.4 0V351" stroke="#b0c8ff" stroke-width="1" stroke-dasharray="3 2 1 3" opacity="0.75"/><rect x="236.8" width="1.0" height="351" fill="#1624a0" opacity="0.75"/><rect x="262.9" width="1.0" height="351" fill="#1624a0" opacity="0.75"/><rect x="287.8" width="1.2" height="351" fill="#4a7ae8" opacity="1"/><path d="M288.4 0V351" stroke="#b0c8ff" stroke-width="1" stroke-dasharray="3 2 1 3" opacity="0.75"/><rect x="314.2" width="1.0" height="351" fill="#0e1670" opacity="0.6"/><rect x="364.9" width="1.2" height="351" fill="#4a7ae8" opacity="1"/><path d="M365.5 0V351" stroke="#b0c8ff" stroke-width="1" stroke-dasharray="3 2 1 3" opacity="0.75"/><rect x="389.9" width="1.2" height="351" fill="#2a4ad8" opacity="1"/><path d="M390.5 0V351" stroke="#80a8ff" stroke-width="1" stroke-dasharray="3 2 1 3" opacity="0.75"/><rect x="466.6" width="1.2" height="351" fill="#2a4ad8" opacity="1"/><path d="M467.2 0V351" stroke="#80a8ff" stroke-width="1" stroke-dasharray="3 2 1 3" opacity="0.75"/><rect x="491.9" width="1.2" height="351" fill="#4a7ae8" opacity="1"/><path d="M492.5 0V351" stroke="#b0c8ff" stroke-width="1" stroke-dasharray="3 2 1 3" opacity="0.75"/><rect x="518.2" width="1.0" height="351" fill="#1624a0" opacity="0.75"/><rect x="568.9" width="1.2" height="351" fill="#2a4ad8" opacity="1"/><path d="M569.5 0V351" stroke="#80a8ff" stroke-width="1" stroke-dasharray="3 2 1 3" opacity="0.75"/><rect x="619.7" width="1.2" height="351" fill="#2a4ad8" opacity="1"/><path d="M620.3 0V351" stroke="#80a8ff" stroke-width="1" stroke-dasharray="3 2 1 3" opacity="0.75"/><rect x="633.1" width="1.0" height="351" fill="#0e1670" opacity="0.6"/><rect x="696.1" width="1.0" height="351" fill="#1624a0" opacity="0.75"/><rect x="747.8" width="1.2" height="351" fill="#2a4ad8" opacity="1"/><path d="M748.4 0V351" stroke="#80a8ff" stroke-width="1" stroke-dasharray="3 2 1 3" opacity="0.75"/><rect x="772.7" width="1.2" height="351" fill="#2a4ad8" opacity="1"/><path d="M773.3 0V351" stroke="#80a8ff" stroke-width="1" stroke-dasharray="3 2 1 3" opacity="0.75"/><rect x="840.4" width="1.0" height="351" fill="#1624a0" opacity="0.75"/><defs><linearGradient id="fg" x1="0" x2="1"><stop offset="0" stop-color="#1830d0" stop-opacity="0"/><stop offset="0.5" stop-color="#1e40e0" stop-opacity="0.22"/><stop offset="1" stop-color="#1830d0" stop-opacity="0"/></linearGradient></defs><rect x="399.5" width="56" height="351" fill="url(#fg)"/><ellipse cx="427.5" cy="10.7" rx="19.5" ry="10.8" fill="#1a36d0" opacity="0.12"/><ellipse cx="427.5" cy="36.0" rx="25.1" ry="9.8" fill="#1a36d0" opacity="0.12"/><ellipse cx="427.5" cy="61.2" rx="18.4" ry="10.8" fill="#1a36d0" opacity="0.12"/><ellipse cx="427.5" cy="86.6" rx="25.9" ry="10.1" fill="#1a36d0" opacity="0.12"/><ellipse cx="427.5" cy="111.9" rx="19.4" ry="12.3" fill="#1a36d0" opacity="0.12"/><ellipse cx="427.5" cy="137.2" rx="26.8" ry="10.0" fill="#1a36d0" opacity="0.12"/><ellipse cx="427.5" cy="162.5" rx="20.4" ry="12.2" fill="#1a36d0" opacity="0.12"/><ellipse cx="427.5" cy="187.8" rx="17.0" ry="10.7" fill="#1a36d0" opacity="0.12"/><ellipse cx="427.5" cy="213.1" rx="18.3" ry="11.1" fill="#1a36d0" opacity="0.12"/><ellipse cx="427.5" cy="238.4" rx="16.2" ry="11.0" fill="#1a36d0" opacity="0.12"/><ellipse cx="427.5" cy="263.6" rx="26.3" ry="9.7" fill="#1a36d0" opacity="0.12"/><ellipse cx="427.5" cy="288.9" rx="24.4" ry="9.8" fill="#1a36d0" opacity="0.12"/><ellipse cx="427.5" cy="314.2" rx="19.5" ry="10.5" fill="#1a36d0" opacity="0.12"/><ellipse cx="427.5" cy="339.6" rx="17.3" ry="11.9" fill="#1a36d0" opacity="0.12"/><ellipse cx="427.5" cy="364.8" rx="25.6" ry="11.9" fill="#1a36d0" opacity="0.12"/><path d="M441 8h1v1h-1zM441 8h2v1h-2zM413 7h1v1h-1zM413 10h4v1h-4zM438 5h3v1h-3zM413 17h2v1h-2zM411 38h1v1h-1zM404 38h2v1h-2zM406 33h1v1h-1zM408 31h4v1h-4zM409 33h2v1h-2zM445 41h1v1h-1zM443 35h1v1h-1zM441 67h2v1h-2zM414 60h2v1h-2zM440 64h1v1h-1zM439 63h2v1h-2zM438 58h2v1h-2zM439 68h3v1h-3zM410 61h4v1h-4zM448 81h2v1h-2zM442 85h4v1h-4zM405 87h2v1h-2zM450 90h1v1h-1zM442 86h2v1h-2zM444 84h4v1h-4zM414 109h1v1h-1zM410 109h1v1h-1zM415 109h2v1h-2zM439 111h2v1h-2zM413 112h2v1h-2zM407 137h4v1h-4zM443 142h4v1h-4zM446 134h2v1h-2zM405 135h3v1h-3zM443 141h1v1h-1zM444 136h3v1h-3zM409 131h2v1h-2zM443 142h1v1h-1zM413 159h4v1h-4zM411 165h2v1h-2zM409 163h3v1h-3zM439 161h3v1h-3zM439 155h4v1h-4zM408 159h4v1h-4zM410 157h1v1h-1zM413 164h2v1h-2zM442 164h2v1h-2zM414 165h2v1h-2zM409 157h1v1h-1zM414 190h2v1h-2zM437 188h1v1h-1zM439 181h1v1h-1zM436 195h4v1h-4zM440 187h4v1h-4zM437 188h1v1h-1zM414 186h4v1h-4zM414 191h3v1h-3zM440 183h2v1h-2zM439 183h1v1h-1zM414 207h1v1h-1zM414 208h4v1h-4zM414 207h3v1h-3zM416 238h2v1h-2zM438 234h2v1h-2zM413 235h2v1h-2zM415 243h2v1h-2zM437 240h4v1h-4zM437 237h4v1h-4zM440 238h1v1h-1zM416 232h2v1h-2zM417 242h1v1h-1zM409 270h3v1h-3zM409 264h2v1h-2zM442 265h4v1h-4zM404 265h4v1h-4zM442 265h3v1h-3zM408 260h1v1h-1zM450 266h2v1h-2zM442 261h4v1h-4zM443 264h2v1h-2zM411 283h2v1h-2zM442 283h1v1h-1zM442 294h3v1h-3zM405 286h1v1h-1zM446 287h2v1h-2zM445 287h2v1h-2zM443 284h4v1h-4zM411 285h2v1h-2zM414 307h3v1h-3zM443 310h2v1h-2zM440 311h4v1h-4zM438 347h3v1h-3zM416 334h1v1h-1zM413 340h1v1h-1zM414 335h3v1h-3zM415 338h1v1h-1z" fill="#1428a0"/><path d="M431 8h4v1h-4zM416 5h4v1h-4zM433 12h2v1h-2zM415 12h1v1h-1zM433 1h1v1h-1zM436 15h2v1h-2zM440 12h2v1h-2zM414 17h2v1h-2zM434 19h2v1h-2zM417 8h3v1h-3zM409 10h2v1h-2zM415 12h4v1h-4zM421 14h2v1h-2zM431 15h4v1h-4zM433 18h2v1h-2zM432 6h2v1h-2zM421 12h3v1h-3zM421 7h1v1h-1zM416 18h3v1h-3zM416 3h3v1h-3zM420 16h3v1h-3zM439 4h2v1h-2zM443 11h2v1h-2zM421 6h1v1h-1zM432 9h1v1h-1zM432 11h3v1h-3zM432 14h2v1h-2zM410 14h4v1h-4zM413 42h2v1h-2zM433 37h4v1h-4zM420 40h2v1h-2zM442 29h1v1h-1zM411 38h2v1h-2zM441 41h2v1h-2zM415 33h1v1h-1zM443 33h2v1h-2zM437 41h1v1h-1zM434 42h2v1h-2zM437 41h1v1h-1zM413 43h2v1h-2zM433 28h2v1h-2zM441 42h3v1h-3zM414 29h2v1h-2zM439 32h2v1h-2zM416 44h3v1h-3zM441 30h2v1h-2zM418 40h1v1h-1zM418 42h1v1h-1zM436 31h3v1h-3zM433 35h2v1h-2zM439 41h2v1h-2zM434 29h2v1h-2zM435 44h2v1h-2zM417 30h1v1h-1zM417 31h2v1h-2zM418 38h4v1h-4zM435 44h4v1h-4zM439 40h1v1h-1zM415 30h1v1h-1zM434 43h4v1h-4zM436 55h3v1h-3zM420 52h4v1h-4zM420 69h4v1h-4zM418 57h1v1h-1zM416 58h2v1h-2zM438 58h1v1h-1zM419 61h3v1h-3zM417 61h3v1h-3zM437 54h2v1h-2zM418 54h3v1h-3zM421 71h2v1h-2zM418 59h1v1h-1zM432 57h2v1h-2zM433 54h2v1h-2zM433 66h1v1h-1zM418 68h4v1h-4zM421 59h2v1h-2zM418 60h4v1h-4zM437 53h1v1h-1zM432 59h3v1h-3zM434 67h2v1h-2zM419 67h3v1h-3zM421 60h1v1h-1zM436 69h1v1h-1zM420 55h2v1h-2zM437 57h2v1h-2zM435 66h1v1h-1zM440 63h3v1h-3zM422 71h1v1h-1zM416 55h2v1h-2zM418 92h2v1h-2zM413 89h1v1h-1zM447 86h2v1h-2zM440 83h3v1h-3zM413 94h3v1h-3zM443 84h3v1h-3zM414 83h1v1h-1zM438 80h1v1h-1zM438 85h3v1h-3zM406 89h4v1h-4zM436 84h2v1h-2zM415 81h1v1h-1zM407 82h4v1h-4zM433 80h2v1h-2zM417 82h2v1h-2zM407 85h1v1h-1zM447 87h4v1h-4zM437 93h3v1h-3zM444 91h1v1h-1zM417 79h2v1h-2zM440 85h4v1h-4zM435 87h2v1h-2zM439 87h3v1h-3zM414 86h2v1h-2zM419 86h2v1h-2zM442 82h2v1h-2zM420 94h2v1h-2zM412 89h4v1h-4zM434 93h1v1h-1zM420 110h4v1h-4zM420 103h2v1h-2zM433 107h1v1h-1zM437 119h2v1h-2zM418 120h1v1h-1zM433 110h2v1h-2zM415 114h2v1h-2zM441 110h1v1h-1zM420 109h2v1h-2zM419 104h3v1h-3zM439 115h2v1h-2zM434 115h4v1h-4zM419 111h1v1h-1zM419 116h2v1h-2zM439 115h3v1h-3zM419 118h3v1h-3zM435 110h2v1h-2zM418 110h2v1h-2zM422 114h1v1h-1zM433 123h1v1h-1zM440 114h4v1h-4zM420 116h2v1h-2zM421 105h2v1h-2zM417 111h1v1h-1zM433 117h4v1h-4zM412 114h2v1h-2zM415 112h4v1h-4zM419 120h3v1h-3zM420 105h4v1h-4zM412 113h1v1h-1zM439 109h2v1h-2zM433 101h1v1h-1zM432 114h2v1h-2zM432 102h2v1h-2zM418 144h1v1h-1zM433 146h3v1h-3zM419 129h3v1h-3zM435 144h4v1h-4zM416 137h1v1h-1zM434 135h3v1h-3zM414 134h4v1h-4zM438 136h4v1h-4zM409 138h2v1h-2zM410 140h3v1h-3zM445 134h1v1h-1zM419 143h2v1h-2zM435 140h2v1h-2zM440 140h4v1h-4zM414 146h2v1h-2zM411 131h1v1h-1zM408 131h3v1h-3zM403 138h4v1h-4zM402 135h1v1h-1zM444 144h2v1h-2zM413 138h3v1h-3zM446 141h2v1h-2zM439 129h3v1h-3zM414 133h4v1h-4zM410 137h4v1h-4zM440 135h1v1h-1zM442 142h2v1h-2zM416 145h1v1h-1zM404 140h2v1h-2zM435 130h1v1h-1zM437 137h4v1h-4zM407 135h3v1h-3zM435 144h4v1h-4zM417 129h4v1h-4zM432 167h1v1h-1zM432 159h4v1h-4zM421 165h3v1h-3zM411 164h3v1h-3zM432 165h2v1h-2zM433 161h1v1h-1zM419 170h3v1h-3zM414 164h2v1h-2zM434 159h3v1h-3zM439 168h1v1h-1zM419 152h1v1h-1zM432 151h3v1h-3zM417 167h3v1h-3zM437 158h1v1h-1zM435 157h4v1h-4zM420 160h4v1h-4zM433 158h2v1h-2zM434 158h3v1h-3zM434 156h4v1h-4zM421 171h2v1h-2zM415 171h2v1h-2zM417 156h2v1h-2zM417 154h2v1h-2zM416 152h4v1h-4zM433 169h1v1h-1zM432 162h3v1h-3zM413 161h4v1h-4zM416 160h2v1h-2zM418 156h4v1h-4zM432 164h2v1h-2zM434 158h4v1h-4zM441 159h2v1h-2zM444 165h1v1h-1zM443 163h1v1h-1zM437 189h2v1h-2zM421 179h3v1h-3zM437 195h1v1h-1zM418 182h4v1h-4zM432 193h2v1h-2zM431 183h3v1h-3zM422 180h2v1h-2zM419 190h4v1h-4zM432 185h3v1h-3zM420 194h2v1h-2zM431 195h2v1h-2zM417 189h2v1h-2zM413 183h2v1h-2zM436 181h4v1h-4zM419 193h4v1h-4zM431 193h3v1h-3zM419 183h4v1h-4zM432 180h3v1h-3zM431 196h3v1h-3zM418 182h2v1h-2zM420 192h3v1h-3zM432 187h4v1h-4zM432 190h4v1h-4zM433 181h3v1h-3zM417 182h4v1h-4zM414 192h2v1h-2zM421 179h2v1h-2zM416 181h2v1h-2zM438 188h1v1h-1zM419 188h3v1h-3zM431 180h2v1h-2zM420 196h2v1h-2zM419 194h2v1h-2zM438 188h2v1h-2zM441 214h1v1h-1zM435 214h2v1h-2zM421 204h2v1h-2zM415 219h4v1h-4zM437 221h1v1h-1zM433 206h1v1h-1zM433 215h2v1h-2zM435 208h2v1h-2zM433 219h1v1h-1zM420 220h3v1h-3zM432 209h2v1h-2zM419 206h1v1h-1zM415 208h3v1h-3zM417 215h1v1h-1zM431 216h3v1h-3zM431 211h4v1h-4zM417 215h4v1h-4zM433 208h1v1h-1zM430 215h4v1h-4zM412 211h1v1h-1zM414 214h2v1h-2zM418 211h2v1h-2zM418 214h3v1h-3zM421 209h2v1h-2zM420 208h2v1h-2zM411 209h2v1h-2zM420 217h2v1h-2zM436 212h1v1h-1zM433 208h3v1h-3zM436 221h4v1h-4zM442 213h2v1h-2zM433 208h4v1h-4zM421 206h1v1h-1zM432 218h2v1h-2zM435 213h4v1h-4zM418 205h4v1h-4zM414 207h4v1h-4zM437 210h4v1h-4zM432 216h3v1h-3zM441 215h3v1h-3zM414 217h4v1h-4zM422 238h1v1h-1zM418 237h1v1h-1zM417 245h4v1h-4zM420 234h3v1h-3zM420 237h2v1h-2zM416 240h2v1h-2zM437 239h3v1h-3zM417 244h4v1h-4zM431 243h3v1h-3zM418 247h3v1h-3zM432 234h1v1h-1zM431 248h4v1h-4zM419 236h3v1h-3zM418 239h3v1h-3zM418 238h1v1h-1zM437 236h4v1h-4zM423 246h1v1h-1zM430 246h4v1h-4zM440 241h3v1h-3zM432 244h4v1h-4zM420 228h4v1h-4zM440 240h1v1h-1zM421 232h1v1h-1zM420 234h3v1h-3zM421 247h1v1h-1zM435 242h2v1h-2zM430 246h3v1h-3zM436 238h3v1h-3zM417 246h2v1h-2zM431 247h2v1h-2zM434 241h2v1h-2zM421 238h2v1h-2zM419 229h4v1h-4zM420 232h1v1h-1zM434 234h2v1h-2zM433 239h3v1h-3zM421 238h3v1h-3zM422 229h2v1h-2zM409 261h2v1h-2zM417 262h3v1h-3zM433 272h4v1h-4zM438 269h3v1h-3zM435 264h4v1h-4zM414 266h2v1h-2zM418 262h3v1h-3zM413 262h3v1h-3zM439 266h3v1h-3zM443 264h2v1h-2zM415 266h4v1h-4zM409 266h2v1h-2zM435 267h2v1h-2zM435 257h3v1h-3zM412 264h3v1h-3zM410 260h2v1h-2zM417 263h4v1h-4zM415 269h2v1h-2zM440 256h2v1h-2zM414 265h3v1h-3zM443 266h4v1h-4zM445 261h4v1h-4zM410 265h3v1h-3zM418 264h2v1h-2zM406 266h4v1h-4zM412 262h4v1h-4zM433 264h3v1h-3zM443 260h2v1h-2zM416 291h2v1h-2zM443 289h2v1h-2zM435 287h2v1h-2zM440 287h1v1h-1zM443 288h4v1h-4zM433 295h3v1h-3zM413 287h3v1h-3zM435 285h4v1h-4zM433 282h4v1h-4zM419 285h3v1h-3zM442 292h4v1h-4zM433 286h3v1h-3zM436 283h2v1h-2zM438 287h2v1h-2zM440 290h2v1h-2zM438 285h3v1h-3zM434 282h2v1h-2zM443 294h4v1h-4zM409 284h4v1h-4zM418 295h3v1h-3zM416 293h4v1h-4zM439 288h2v1h-2zM417 289h4v1h-4zM417 296h1v1h-1zM410 294h4v1h-4zM437 297h1v1h-1zM410 294h4v1h-4zM433 290h4v1h-4zM434 296h4v1h-4zM433 289h2v1h-2zM436 292h1v1h-1zM419 291h1v1h-1zM432 315h2v1h-2zM441 320h2v1h-2zM420 312h1v1h-1zM431 318h4v1h-4zM433 321h2v1h-2zM420 320h3v1h-3zM437 315h1v1h-1zM421 309h2v1h-2zM419 319h3v1h-3zM434 323h1v1h-1zM419 319h1v1h-1zM438 313h2v1h-2zM419 314h2v1h-2zM433 320h2v1h-2zM412 309h2v1h-2zM439 314h2v1h-2zM432 317h3v1h-3zM419 321h4v1h-4zM420 309h3v1h-3zM440 312h1v1h-1zM432 305h4v1h-4zM412 312h2v1h-2zM433 319h2v1h-2zM438 310h3v1h-3zM419 320h2v1h-2zM417 308h1v1h-1zM409 315h1v1h-1zM442 318h2v1h-2zM434 314h4v1h-4zM419 310h2v1h-2zM420 312h1v1h-1zM438 312h4v1h-4zM410 315h3v1h-3zM421 305h3v1h-3zM435 313h2v1h-2zM420 309h3v1h-3zM440 317h3v1h-3zM416 310h2v1h-2zM434 324h4v1h-4zM433 338h2v1h-2zM422 335h2v1h-2zM432 333h2v1h-2zM436 335h2v1h-2zM420 341h4v1h-4zM437 335h2v1h-2zM422 347h1v1h-1zM417 347h4v1h-4zM416 339h2v1h-2zM418 344h3v1h-3zM419 331h4v1h-4zM412 341h4v1h-4zM434 336h2v1h-2zM431 331h2v1h-2zM418 344h1v1h-1zM435 342h1v1h-1zM421 331h2v1h-2zM421 340h4v1h-4zM433 338h1v1h-1zM413 345h2v1h-2zM416 340h1v1h-1zM418 345h2v1h-2zM420 339h1v1h-1zM432 330h1v1h-1zM415 336h3v1h-3zM418 346h4v1h-4zM421 335h4v1h-4zM434 341h2v1h-2zM420 350h2v1h-2zM432 345h2v1h-2zM420 342h1v1h-1zM419 338h3v1h-3z" fill="#1e3cc8"/><path d="M435 12h1v1h-1zM426 19h2v1h-2zM436 3h1v1h-1zM421 18h1v1h-1zM434 18h2v1h-2zM423 4h4v1h-4zM423 12h2v1h-2zM435 6h2v1h-2zM431 5h4v1h-4zM423 8h4v1h-4zM434 12h1v1h-1zM431 4h3v1h-3zM431 18h1v1h-1zM427 13h3v1h-3zM416 3h2v1h-2zM435 15h1v1h-1zM427 0h1v1h-1zM426 5h4v1h-4zM422 18h2v1h-2zM422 19h4v1h-4zM431 3h3v1h-3zM431 1h2v1h-2zM438 15h2v1h-2zM417 6h2v1h-2zM419 5h4v1h-4zM417 6h1v1h-1zM417 14h1v1h-1zM433 20h4v1h-4zM415 15h2v1h-2zM437 7h4v1h-4zM427 0h2v1h-2zM431 11h3v1h-3zM432 17h2v1h-2zM422 20h2v1h-2zM426 1h2v1h-2zM427 3h2v1h-2zM424 10h3v1h-3zM415 19h1v1h-1zM424 1h1v1h-1zM434 16h1v1h-1zM420 2h2v1h-2zM430 5h1v1h-1zM419 18h2v1h-2zM428 14h2v1h-2zM430 15h4v1h-4zM426 16h3v1h-3zM433 5h1v1h-1zM430 8h2v1h-2zM437 6h4v1h-4zM420 8h2v1h-2zM435 7h3v1h-3zM419 3h4v1h-4zM415 11h3v1h-3zM425 15h4v1h-4zM423 3h2v1h-2zM434 13h4v1h-4zM415 4h4v1h-4zM415 11h2v1h-2zM415 13h2v1h-2zM432 1h4v1h-4zM423 17h4v1h-4zM433 4h2v1h-2zM430 7h4v1h-4zM425 21h2v1h-2zM418 12h3v1h-3zM430 2h1v1h-1zM425 19h1v1h-1zM428 5h3v1h-3zM420 15h3v1h-3zM417 30h4v1h-4zM434 38h2v1h-2zM434 36h2v1h-2zM434 31h3v1h-3zM422 33h1v1h-1zM419 30h3v1h-3zM421 36h3v1h-3zM418 44h2v1h-2zM433 27h2v1h-2zM423 39h2v1h-2zM434 40h2v1h-2zM414 34h1v1h-1zM417 31h4v1h-4zM412 30h2v1h-2zM426 26h1v1h-1zM426 46h2v1h-2zM426 38h3v1h-3zM429 42h4v1h-4zM431 44h3v1h-3zM428 45h4v1h-4zM428 27h4v1h-4zM423 30h2v1h-2zM416 34h2v1h-2zM436 44h3v1h-3zM434 34h2v1h-2zM416 35h1v1h-1zM429 45h2v1h-2zM417 29h1v1h-1zM440 38h2v1h-2zM425 32h3v1h-3zM418 39h4v1h-4zM423 44h1v1h-1zM441 30h1v1h-1zM428 43h4v1h-4zM432 29h2v1h-2zM430 40h4v1h-4zM433 30h4v1h-4zM423 45h2v1h-2zM430 32h2v1h-2zM427 41h1v1h-1zM417 35h2v1h-2zM435 41h2v1h-2zM436 42h2v1h-2zM420 32h1v1h-1zM415 42h2v1h-2zM436 42h1v1h-1zM424 37h1v1h-1zM422 29h3v1h-3zM434 27h1v1h-1zM426 38h2v1h-2zM426 40h2v1h-2zM417 44h2v1h-2zM414 31h3v1h-3zM435 44h2v1h-2zM427 38h4v1h-4zM432 38h2v1h-2zM431 27h1v1h-1zM413 43h2v1h-2zM426 32h2v1h-2zM417 41h4v1h-4zM433 69h2v1h-2zM419 60h2v1h-2zM423 70h2v1h-2zM416 60h3v1h-3zM429 54h3v1h-3zM430 71h2v1h-2zM416 66h2v1h-2zM434 65h2v1h-2zM428 71h4v1h-4zM426 71h4v1h-4zM424 54h2v1h-2zM425 57h1v1h-1zM432 57h2v1h-2zM433 70h3v1h-3zM421 56h2v1h-2zM424 62h2v1h-2zM420 70h2v1h-2zM423 64h1v1h-1zM426 62h2v1h-2zM432 65h3v1h-3zM434 65h3v1h-3zM425 51h4v1h-4zM432 59h4v1h-4zM425 68h3v1h-3zM419 70h1v1h-1zM420 56h2v1h-2zM423 71h1v1h-1zM426 63h2v1h-2zM420 70h2v1h-2zM431 64h1v1h-1zM423 58h2v1h-2zM430 61h3v1h-3zM429 63h3v1h-3zM432 58h1v1h-1zM425 70h1v1h-1zM424 52h1v1h-1zM433 69h2v1h-2zM435 68h2v1h-2zM429 52h3v1h-3zM433 60h3v1h-3zM426 56h1v1h-1zM417 64h2v1h-2zM425 53h2v1h-2zM426 64h2v1h-2zM421 61h2v1h-2zM429 51h1v1h-1zM430 57h2v1h-2zM418 65h2v1h-2zM427 51h4v1h-4zM436 67h2v1h-2zM422 69h3v1h-3zM432 59h2v1h-2zM425 51h3v1h-3zM426 72h2v1h-2zM425 70h1v1h-1zM427 71h2v1h-2zM416 58h4v1h-4zM431 69h3v1h-3zM419 60h3v1h-3zM434 92h3v1h-3zM433 95h1v1h-1zM428 94h2v1h-2zM427 97h3v1h-3zM419 83h2v1h-2zM421 88h3v1h-3zM416 80h1v1h-1zM412 84h3v1h-3zM431 89h1v1h-1zM418 88h1v1h-1zM429 79h2v1h-2zM424 77h3v1h-3zM434 96h2v1h-2zM435 85h2v1h-2zM421 79h3v1h-3zM418 95h3v1h-3zM423 95h2v1h-2zM423 95h2v1h-2zM428 97h1v1h-1zM425 97h2v1h-2zM428 93h2v1h-2zM414 94h2v1h-2zM433 89h1v1h-1zM427 94h1v1h-1zM437 78h3v1h-3zM433 80h2v1h-2zM440 89h1v1h-1zM419 85h3v1h-3zM428 80h2v1h-2zM421 87h2v1h-2zM420 83h2v1h-2zM420 90h4v1h-4zM438 78h2v1h-2zM440 87h1v1h-1zM427 97h2v1h-2zM417 82h4v1h-4zM423 93h1v1h-1zM436 81h2v1h-2zM426 81h2v1h-2zM420 90h3v1h-3zM416 91h1v1h-1zM431 87h3v1h-3zM412 78h3v1h-3zM426 79h1v1h-1zM421 83h2v1h-2zM417 80h4v1h-4zM424 91h1v1h-1zM411 80h4v1h-4zM426 79h1v1h-1zM437 87h2v1h-2zM413 91h2v1h-2zM424 93h2v1h-2zM417 89h2v1h-2zM437 95h3v1h-3zM429 80h2v1h-2zM419 87h4v1h-4zM439 88h3v1h-3zM423 79h2v1h-2zM425 77h3v1h-3zM421 78h4v1h-4zM424 93h1v1h-1zM434 117h1v1h-1zM436 115h4v1h-4zM421 110h2v1h-2zM427 124h2v1h-2zM426 116h2v1h-2zM419 113h4v1h-4zM428 103h4v1h-4zM422 113h2v1h-2zM425 121h2v1h-2zM419 113h2v1h-2zM428 102h2v1h-2zM423 120h3v1h-3zM436 107h1v1h-1zM435 116h3v1h-3zM432 103h3v1h-3zM433 120h1v1h-1zM419 121h2v1h-2zM430 103h4v1h-4zM421 120h3v1h-3zM434 105h2v1h-2zM429 121h3v1h-3zM417 119h3v1h-3zM421 122h2v1h-2zM418 106h2v1h-2zM420 117h1v1h-1zM432 116h4v1h-4zM422 107h2v1h-2zM426 109h3v1h-3zM420 109h1v1h-1zM435 116h3v1h-3zM433 103h1v1h-1zM418 103h2v1h-2zM429 115h1v1h-1zM424 102h2v1h-2zM432 112h3v1h-3zM428 122h2v1h-2zM427 100h4v1h-4zM422 122h2v1h-2zM426 116h3v1h-3zM430 101h3v1h-3zM431 121h2v1h-2zM433 109h1v1h-1zM428 102h2v1h-2zM422 110h1v1h-1zM421 122h2v1h-2zM436 116h3v1h-3zM427 124h2v1h-2zM419 105h2v1h-2zM423 107h4v1h-4zM428 100h2v1h-2zM419 108h3v1h-3zM427 121h1v1h-1zM427 110h1v1h-1zM425 123h4v1h-4zM434 118h2v1h-2zM413 131h2v1h-2zM435 129h1v1h-1zM431 146h2v1h-2zM440 132h3v1h-3zM428 141h2v1h-2zM411 133h1v1h-1zM415 138h1v1h-1zM432 132h2v1h-2zM430 135h3v1h-3zM437 145h4v1h-4zM436 144h1v1h-1zM418 129h3v1h-3zM427 128h2v1h-2zM428 143h1v1h-1zM419 142h2v1h-2zM414 134h2v1h-2zM422 142h2v1h-2zM419 143h2v1h-2zM419 133h4v1h-4zM431 139h2v1h-2zM432 137h2v1h-2zM433 137h3v1h-3zM422 130h2v1h-2zM417 134h2v1h-2zM428 131h2v1h-2zM438 134h3v1h-3zM428 146h2v1h-2zM422 145h2v1h-2zM430 140h3v1h-3zM440 142h3v1h-3zM440 131h3v1h-3zM419 143h4v1h-4zM419 144h2v1h-2zM428 146h2v1h-2zM435 130h2v1h-2zM427 137h1v1h-1zM433 135h4v1h-4zM424 132h4v1h-4zM421 128h2v1h-2zM432 136h4v1h-4zM425 140h4v1h-4zM423 138h2v1h-2zM430 135h2v1h-2zM411 130h4v1h-4zM418 146h2v1h-2zM410 134h4v1h-4zM437 131h2v1h-2zM420 138h4v1h-4zM435 132h2v1h-2zM436 132h2v1h-2zM422 129h4v1h-4zM434 141h1v1h-1zM426 144h2v1h-2zM428 129h2v1h-2zM420 146h4v1h-4zM437 137h2v1h-2zM414 140h3v1h-3zM417 131h2v1h-2zM419 143h2v1h-2zM418 136h4v1h-4zM418 170h3v1h-3zM426 151h4v1h-4zM429 153h1v1h-1zM433 159h1v1h-1zM428 164h2v1h-2zM421 170h2v1h-2zM433 163h2v1h-2zM418 156h1v1h-1zM429 151h3v1h-3zM420 162h3v1h-3zM429 173h1v1h-1zM437 158h1v1h-1zM422 174h3v1h-3zM416 163h4v1h-4zM422 157h3v1h-3zM437 168h2v1h-2zM426 159h2v1h-2zM438 160h1v1h-1zM436 159h2v1h-2zM419 161h3v1h-3zM429 171h3v1h-3zM429 158h2v1h-2zM439 161h2v1h-2zM418 171h2v1h-2zM428 174h2v1h-2zM416 172h1v1h-1zM435 170h1v1h-1zM422 174h4v1h-4zM425 150h4v1h-4zM421 152h2v1h-2zM427 175h2v1h-2zM420 173h4v1h-4zM428 153h4v1h-4zM414 157h4v1h-4zM420 170h2v1h-2zM415 160h2v1h-2zM429 151h1v1h-1zM425 166h3v1h-3zM427 172h1v1h-1zM414 165h4v1h-4zM435 163h4v1h-4zM423 174h3v1h-3zM432 159h2v1h-2zM432 173h3v1h-3zM423 174h3v1h-3zM427 172h1v1h-1zM430 170h1v1h-1zM422 157h3v1h-3zM419 164h3v1h-3zM435 169h1v1h-1zM426 167h2v1h-2zM415 162h2v1h-2zM417 173h3v1h-3zM436 154h2v1h-2zM419 156h3v1h-3zM421 174h4v1h-4zM426 153h2v1h-2zM420 153h2v1h-2zM430 171h3v1h-3zM428 150h1v1h-1zM436 182h2v1h-2zM430 189h4v1h-4zM416 195h4v1h-4zM427 183h2v1h-2zM419 185h2v1h-2zM426 182h1v1h-1zM432 188h1v1h-1zM437 185h1v1h-1zM424 183h2v1h-2zM416 196h4v1h-4zM437 192h2v1h-2zM421 192h4v1h-4zM427 182h1v1h-1zM428 178h2v1h-2zM420 195h2v1h-2zM418 183h1v1h-1zM428 179h3v1h-3zM431 184h4v1h-4zM430 184h4v1h-4zM430 179h3v1h-3zM428 195h3v1h-3zM430 195h2v1h-2zM419 181h1v1h-1zM430 198h1v1h-1zM424 193h4v1h-4zM426 195h4v1h-4zM430 188h2v1h-2zM427 183h3v1h-3zM425 194h4v1h-4zM425 196h2v1h-2zM421 188h4v1h-4zM431 181h2v1h-2zM428 178h1v1h-1zM428 197h2v1h-2zM432 195h4v1h-4zM426 178h1v1h-1zM429 185h2v1h-2zM425 188h4v1h-4zM434 190h4v1h-4zM430 187h3v1h-3zM428 197h1v1h-1zM426 181h3v1h-3zM430 182h3v1h-3zM424 194h2v1h-2zM422 197h4v1h-4zM423 179h4v1h-4zM428 181h1v1h-1zM428 193h3v1h-3zM427 177h4v1h-4zM418 184h1v1h-1zM434 193h2v1h-2zM419 190h1v1h-1zM422 180h1v1h-1zM432 187h4v1h-4zM425 192h4v1h-4zM431 189h3v1h-3zM429 195h4v1h-4zM434 181h3v1h-3zM433 220h1v1h-1zM422 215h2v1h-2zM420 220h3v1h-3zM429 222h2v1h-2zM432 208h1v1h-1zM431 208h1v1h-1zM420 217h1v1h-1zM431 203h2v1h-2zM434 207h1v1h-1zM434 211h3v1h-3zM425 207h2v1h-2zM428 207h3v1h-3zM417 219h2v1h-2zM432 212h3v1h-3zM421 222h1v1h-1zM430 203h3v1h-3zM423 214h2v1h-2zM434 216h2v1h-2zM434 216h2v1h-2zM418 220h2v1h-2zM417 213h2v1h-2zM418 220h1v1h-1zM429 206h1v1h-1zM418 207h1v1h-1zM433 213h2v1h-2zM434 215h4v1h-4zM434 209h1v1h-1zM419 210h3v1h-3zM434 205h3v1h-3zM427 211h1v1h-1zM429 215h1v1h-1zM427 219h2v1h-2zM419 218h4v1h-4zM426 224h3v1h-3zM438 207h1v1h-1zM428 203h2v1h-2zM426 202h3v1h-3zM437 206h2v1h-2zM425 223h3v1h-3zM427 216h3v1h-3zM434 213h1v1h-1zM428 222h3v1h-3zM430 219h3v1h-3zM431 211h4v1h-4zM434 213h2v1h-2zM426 203h2v1h-2zM425 212h1v1h-1zM420 205h2v1h-2zM427 222h4v1h-4zM434 207h3v1h-3zM427 203h2v1h-2zM431 204h4v1h-4zM425 203h2v1h-2zM433 207h2v1h-2zM424 214h1v1h-1zM428 208h2v1h-2zM435 235h3v1h-3zM430 231h2v1h-2zM426 245h3v1h-3zM423 235h3v1h-3zM428 246h2v1h-2zM430 248h2v1h-2zM433 243h1v1h-1zM423 238h3v1h-3zM428 233h2v1h-2zM423 234h3v1h-3zM419 232h4v1h-4zM430 247h4v1h-4zM422 244h1v1h-1zM431 235h2v1h-2zM427 228h2v1h-2zM428 249h2v1h-2zM418 234h2v1h-2zM423 236h2v1h-2zM423 234h1v1h-1zM419 231h2v1h-2zM430 240h3v1h-3zM426 249h2v1h-2zM430 229h2v1h-2zM432 234h3v1h-3zM432 245h2v1h-2zM428 230h3v1h-3zM426 245h4v1h-4zM421 232h4v1h-4zM426 249h2v1h-2zM428 248h1v1h-1zM425 247h2v1h-2zM418 236h2v1h-2zM424 248h2v1h-2zM418 243h2v1h-2zM430 228h2v1h-2zM431 232h2v1h-2zM418 238h3v1h-3zM428 232h2v1h-2zM429 236h3v1h-3zM427 249h2v1h-2zM417 230h2v1h-2zM434 231h2v1h-2zM428 249h4v1h-4zM434 238h4v1h-4zM428 237h2v1h-2zM430 244h4v1h-4zM429 249h3v1h-3zM434 235h2v1h-2zM420 232h2v1h-2zM428 228h4v1h-4zM418 240h2v1h-2zM435 236h2v1h-2zM424 242h3v1h-3zM417 236h4v1h-4zM433 237h4v1h-4zM432 231h3v1h-3zM430 236h2v1h-2zM420 243h3v1h-3zM427 233h1v1h-1zM436 239h3v1h-3zM416 265h3v1h-3zM424 261h1v1h-1zM411 267h4v1h-4zM424 267h2v1h-2zM430 257h1v1h-1zM423 260h4v1h-4zM423 271h4v1h-4zM417 264h3v1h-3zM419 256h2v1h-2zM432 255h1v1h-1zM410 270h3v1h-3zM431 257h2v1h-2zM431 271h1v1h-1zM441 267h3v1h-3zM433 256h2v1h-2zM432 256h1v1h-1zM424 259h4v1h-4zM436 256h2v1h-2zM423 273h3v1h-3zM418 269h2v1h-2zM418 272h4v1h-4zM424 262h2v1h-2zM417 263h1v1h-1zM428 262h4v1h-4zM411 265h3v1h-3zM432 260h3v1h-3zM427 258h4v1h-4zM424 262h3v1h-3zM428 268h4v1h-4zM436 266h4v1h-4zM421 257h3v1h-3zM431 256h2v1h-2zM430 258h4v1h-4zM426 256h4v1h-4zM415 259h1v1h-1zM440 262h3v1h-3zM423 269h2v1h-2zM418 272h4v1h-4zM434 262h2v1h-2zM425 262h1v1h-1zM424 256h3v1h-3zM429 273h3v1h-3zM438 271h1v1h-1zM427 255h4v1h-4zM434 257h2v1h-2zM419 255h2v1h-2zM422 271h1v1h-1zM425 272h2v1h-2zM424 272h4v1h-4zM419 261h2v1h-2zM419 260h2v1h-2zM425 265h4v1h-4zM423 272h3v1h-3zM436 269h4v1h-4zM423 269h2v1h-2zM425 265h4v1h-4zM425 259h1v1h-1zM420 259h2v1h-2zM421 269h4v1h-4zM431 265h2v1h-2zM430 260h3v1h-3zM430 262h4v1h-4zM418 293h4v1h-4zM422 287h1v1h-1zM416 287h3v1h-3zM417 297h3v1h-3zM414 296h4v1h-4zM428 279h1v1h-1zM431 298h4v1h-4zM423 295h2v1h-2zM426 299h3v1h-3zM416 286h4v1h-4zM437 294h3v1h-3zM423 297h4v1h-4zM424 280h2v1h-2zM435 296h2v1h-2zM417 295h2v1h-2zM416 288h1v1h-1zM429 284h3v1h-3zM421 283h4v1h-4zM412 287h4v1h-4zM429 286h3v1h-3zM428 298h3v1h-3zM412 287h4v1h-4zM425 298h2v1h-2zM439 284h4v1h-4zM427 288h2v1h-2zM440 286h2v1h-2zM427 298h4v1h-4zM413 295h2v1h-2zM420 295h4v1h-4zM441 288h1v1h-1zM415 289h1v1h-1zM432 295h3v1h-3zM428 292h2v1h-2zM430 284h2v1h-2zM421 298h2v1h-2zM428 296h2v1h-2zM432 298h1v1h-1zM422 297h2v1h-2zM439 294h3v1h-3zM432 289h2v1h-2zM413 287h3v1h-3zM422 298h1v1h-1zM425 299h4v1h-4zM424 281h1v1h-1zM416 286h3v1h-3zM422 281h2v1h-2zM435 285h2v1h-2zM427 285h2v1h-2zM435 287h1v1h-1zM412 294h4v1h-4zM420 296h2v1h-2zM419 294h3v1h-3zM430 288h1v1h-1zM436 283h2v1h-2zM438 296h2v1h-2zM421 282h1v1h-1zM434 289h1v1h-1zM428 299h3v1h-3zM423 314h3v1h-3zM430 308h1v1h-1zM428 306h1v1h-1zM435 314h2v1h-2zM421 309h1v1h-1zM420 321h4v1h-4zM435 318h3v1h-3zM417 316h1v1h-1zM429 317h1v1h-1zM424 305h1v1h-1zM426 315h2v1h-2zM421 322h2v1h-2zM435 314h2v1h-2zM433 310h4v1h-4zM421 311h2v1h-2zM429 304h2v1h-2zM434 313h2v1h-2zM419 309h1v1h-1zM431 317h2v1h-2zM437 306h2v1h-2zM428 304h2v1h-2zM424 309h3v1h-3zM423 305h2v1h-2zM426 322h1v1h-1zM420 307h3v1h-3zM430 324h3v1h-3zM424 308h2v1h-2zM419 311h2v1h-2zM425 307h4v1h-4zM420 320h2v1h-2zM417 311h2v1h-2zM434 313h2v1h-2zM437 316h3v1h-3zM428 324h2v1h-2zM418 312h4v1h-4zM425 304h2v1h-2zM418 322h1v1h-1zM432 317h1v1h-1zM427 316h2v1h-2zM427 304h3v1h-3zM416 319h2v1h-2zM422 320h2v1h-2zM429 313h4v1h-4zM434 315h1v1h-1zM436 306h2v1h-2zM420 320h2v1h-2zM417 313h4v1h-4zM418 318h3v1h-3zM432 305h3v1h-3zM419 306h2v1h-2zM431 318h3v1h-3zM437 320h2v1h-2zM434 311h3v1h-3zM435 311h2v1h-2zM420 341h2v1h-2zM427 331h2v1h-2zM424 347h2v1h-2zM423 339h2v1h-2zM427 328h3v1h-3zM433 346h2v1h-2zM417 334h3v1h-3zM423 339h1v1h-1zM430 333h4v1h-4zM418 340h3v1h-3zM430 330h2v1h-2zM424 350h1v1h-1zM435 338h2v1h-2zM418 339h4v1h-4zM429 335h1v1h-1zM431 346h4v1h-4zM431 338h4v1h-4zM425 343h4v1h-4zM433 338h3v1h-3zM422 346h3v1h-3zM432 346h4v1h-4zM426 349h3v1h-3zM433 350h1v1h-1zM427 349h4v1h-4zM424 337h2v1h-2zM428 350h4v1h-4zM426 331h2v1h-2zM421 335h2v1h-2zM430 338h4v1h-4zM430 332h4v1h-4zM435 345h2v1h-2zM421 336h2v1h-2zM430 347h1v1h-1zM422 332h2v1h-2zM429 350h2v1h-2zM421 348h3v1h-3zM428 351h2v1h-2zM418 342h2v1h-2zM417 333h2v1h-2zM435 345h1v1h-1zM430 339h4v1h-4zM432 348h4v1h-4zM432 329h3v1h-3zM422 350h1v1h-1zM426 351h2v1h-2zM429 347h3v1h-3zM432 348h3v1h-3zM427 329h2v1h-2zM420 336h2v1h-2zM429 330h3v1h-3zM423 350h2v1h-2zM417 339h2v1h-2zM436 348h3v1h-3zM424 332h2v1h-2zM427 338h2v1h-2zM420 334h3v1h-3zM421 347h2v1h-2zM433 332h2v1h-2z" fill="#2e5ee8"/><path d="M435 2h3v1h-3zM427 21h2v1h-2zM437 9h2v1h-2zM435 19h4v1h-4zM431 2h2v1h-2zM420 9h2v1h-2zM423 17h4v1h-4zM431 2h2v1h-2zM422 10h2v1h-2zM437 11h1v1h-1zM429 5h2v1h-2zM426 7h2v1h-2zM426 6h4v1h-4zM438 11h2v1h-2zM431 14h1v1h-1zM427 12h2v1h-2zM427 13h2v1h-2zM433 5h2v1h-2zM437 12h2v1h-2zM428 1h2v1h-2zM430 4h3v1h-3zM418 5h2v1h-2zM425 20h1v1h-1zM425 21h1v1h-1zM430 0h1v1h-1zM423 9h1v1h-1zM436 16h1v1h-1zM427 21h4v1h-4zM418 10h4v1h-4zM420 3h1v1h-1zM422 16h1v1h-1zM426 4h3v1h-3zM421 18h4v1h-4zM415 8h4v1h-4zM429 27h1v1h-1zM429 29h3v1h-3zM428 32h4v1h-4zM415 28h4v1h-4zM421 31h2v1h-2zM425 37h4v1h-4zM431 27h4v1h-4zM426 46h4v1h-4zM427 44h4v1h-4zM427 42h2v1h-2zM430 44h1v1h-1zM440 29h3v1h-3zM422 44h4v1h-4zM427 32h3v1h-3zM421 43h2v1h-2zM430 44h4v1h-4zM420 33h3v1h-3zM434 37h4v1h-4zM423 41h2v1h-2zM428 29h3v1h-3zM420 34h3v1h-3zM434 40h2v1h-2zM426 37h2v1h-2zM421 45h3v1h-3zM416 36h1v1h-1zM420 42h1v1h-1zM419 27h4v1h-4zM426 33h2v1h-2zM439 30h2v1h-2zM428 26h1v1h-1zM432 27h1v1h-1zM432 40h4v1h-4zM425 45h2v1h-2zM428 72h1v1h-1zM431 70h2v1h-2zM423 51h3v1h-3zM426 68h4v1h-4zM427 70h2v1h-2zM424 51h3v1h-3zM436 64h3v1h-3zM431 69h1v1h-1zM429 59h1v1h-1zM435 57h2v1h-2zM425 56h3v1h-3zM427 53h2v1h-2zM429 70h3v1h-3zM427 53h1v1h-1zM423 70h3v1h-3zM424 72h2v1h-2zM428 71h3v1h-3zM425 55h2v1h-2zM421 53h2v1h-2zM430 63h2v1h-2zM433 60h2v1h-2zM438 61h1v1h-1zM423 53h1v1h-1zM428 59h4v1h-4zM432 64h2v1h-2zM423 61h3v1h-3zM430 52h2v1h-2zM418 58h4v1h-4zM423 51h3v1h-3zM426 53h2v1h-2zM427 52h2v1h-2zM427 69h1v1h-1zM425 60h1v1h-1zM425 54h1v1h-1zM427 70h3v1h-3zM430 61h3v1h-3zM423 53h2v1h-2zM432 62h4v1h-4zM431 57h2v1h-2zM434 55h2v1h-2zM424 59h2v1h-2zM420 58h1v1h-1zM431 62h4v1h-4zM429 53h2v1h-2zM424 71h2v1h-2zM428 51h4v1h-4zM425 92h4v1h-4zM419 88h4v1h-4zM423 89h4v1h-4zM425 83h1v1h-1zM433 85h3v1h-3zM424 96h1v1h-1zM427 89h1v1h-1zM419 78h3v1h-3zM431 78h2v1h-2zM438 82h4v1h-4zM432 77h4v1h-4zM428 96h3v1h-3zM419 93h2v1h-2zM415 86h2v1h-2zM419 80h1v1h-1zM436 81h2v1h-2zM424 83h2v1h-2zM436 86h2v1h-2zM411 86h2v1h-2zM419 84h2v1h-2zM424 91h1v1h-1zM421 93h2v1h-2zM418 78h4v1h-4zM415 84h2v1h-2zM429 88h1v1h-1zM439 86h1v1h-1zM422 81h1v1h-1zM427 78h2v1h-2zM431 83h3v1h-3zM414 90h4v1h-4zM432 91h2v1h-2zM439 83h4v1h-4zM426 80h2v1h-2zM423 93h2v1h-2zM426 96h1v1h-1zM423 91h1v1h-1zM430 81h1v1h-1zM421 81h4v1h-4zM416 109h2v1h-2zM428 120h1v1h-1zM430 115h2v1h-2zM427 114h1v1h-1zM427 104h2v1h-2zM422 105h2v1h-2zM424 106h2v1h-2zM425 110h3v1h-3zM424 103h4v1h-4zM430 105h4v1h-4zM430 121h4v1h-4zM423 121h2v1h-2zM423 110h1v1h-1zM425 118h3v1h-3zM432 102h1v1h-1zM431 115h3v1h-3zM425 100h3v1h-3zM431 122h1v1h-1zM424 103h2v1h-2zM428 116h3v1h-3zM426 119h4v1h-4zM427 109h2v1h-2zM433 105h2v1h-2zM426 111h4v1h-4zM432 102h2v1h-2zM423 102h4v1h-4zM430 121h4v1h-4zM424 122h1v1h-1zM429 105h2v1h-2zM426 120h1v1h-1zM429 101h1v1h-1zM428 102h2v1h-2zM429 101h1v1h-1zM428 124h1v1h-1zM423 106h3v1h-3zM433 104h1v1h-1zM418 119h2v1h-2zM422 131h4v1h-4zM430 136h4v1h-4zM426 145h1v1h-1zM426 140h3v1h-3zM420 128h3v1h-3zM420 146h4v1h-4zM428 128h3v1h-3zM426 147h3v1h-3zM432 146h3v1h-3zM415 133h2v1h-2zM432 139h4v1h-4zM424 128h2v1h-2zM429 130h4v1h-4zM442 137h1v1h-1zM422 137h4v1h-4zM430 143h2v1h-2zM433 129h1v1h-1zM428 128h3v1h-3zM427 129h4v1h-4zM424 131h1v1h-1zM432 142h4v1h-4zM424 141h4v1h-4zM428 128h2v1h-2zM425 133h1v1h-1zM435 135h2v1h-2zM424 145h3v1h-3zM440 140h4v1h-4zM420 131h3v1h-3zM435 144h2v1h-2zM420 131h2v1h-2zM435 144h3v1h-3zM421 132h1v1h-1zM430 128h4v1h-4zM417 136h1v1h-1zM415 133h1v1h-1zM426 128h3v1h-3zM430 145h2v1h-2zM427 134h3v1h-3zM421 141h3v1h-3zM423 169h1v1h-1zM428 155h2v1h-2zM422 173h2v1h-2zM420 160h2v1h-2zM424 162h3v1h-3zM426 171h2v1h-2zM429 159h4v1h-4zM429 159h2v1h-2zM431 172h3v1h-3zM423 151h1v1h-1zM431 156h2v1h-2zM424 152h1v1h-1zM426 174h4v1h-4zM427 150h2v1h-2zM429 174h1v1h-1zM423 173h1v1h-1zM425 173h3v1h-3zM426 160h4v1h-4zM429 173h2v1h-2zM438 164h1v1h-1zM424 156h2v1h-2zM421 165h4v1h-4zM423 171h2v1h-2zM426 150h4v1h-4zM424 157h3v1h-3zM426 171h2v1h-2zM426 161h2v1h-2zM422 157h2v1h-2zM437 163h4v1h-4zM428 154h1v1h-1zM424 158h2v1h-2zM432 152h1v1h-1zM426 174h2v1h-2zM428 152h1v1h-1zM427 190h2v1h-2zM429 181h3v1h-3zM431 184h2v1h-2zM423 185h4v1h-4zM429 180h2v1h-2zM423 189h3v1h-3zM429 188h4v1h-4zM427 193h2v1h-2zM417 193h2v1h-2zM430 188h2v1h-2zM428 188h2v1h-2zM427 185h2v1h-2zM426 186h1v1h-1zM426 192h2v1h-2zM426 189h2v1h-2zM427 198h2v1h-2zM419 193h2v1h-2zM421 178h1v1h-1zM425 197h2v1h-2zM425 186h4v1h-4zM428 197h1v1h-1zM431 197h3v1h-3zM428 196h1v1h-1zM428 182h1v1h-1zM428 193h1v1h-1zM421 196h1v1h-1zM419 179h2v1h-2zM428 178h3v1h-3zM426 186h3v1h-3zM423 198h2v1h-2zM417 184h4v1h-4zM423 178h1v1h-1zM427 196h2v1h-2zM424 180h1v1h-1zM436 184h1v1h-1zM436 187h2v1h-2zM429 204h4v1h-4zM420 220h2v1h-2zM424 204h2v1h-2zM429 224h3v1h-3zM424 224h2v1h-2zM433 205h4v1h-4zM426 204h2v1h-2zM419 207h4v1h-4zM426 222h1v1h-1zM425 205h1v1h-1zM426 222h1v1h-1zM426 223h3v1h-3zM429 203h3v1h-3zM419 219h4v1h-4zM418 205h4v1h-4zM430 218h4v1h-4zM424 209h1v1h-1zM426 214h2v1h-2zM423 203h2v1h-2zM426 223h2v1h-2zM427 220h1v1h-1zM437 209h2v1h-2zM428 222h1v1h-1zM430 215h1v1h-1zM426 215h1v1h-1zM430 222h1v1h-1zM427 203h4v1h-4zM416 211h4v1h-4zM421 220h2v1h-2zM430 213h3v1h-3zM425 224h3v1h-3zM428 244h2v1h-2zM433 244h4v1h-4zM426 248h1v1h-1zM426 231h2v1h-2zM431 245h1v1h-1zM427 228h2v1h-2zM419 232h4v1h-4zM423 235h3v1h-3zM430 241h1v1h-1zM427 234h1v1h-1zM430 247h3v1h-3zM431 246h1v1h-1zM416 243h3v1h-3zM429 229h2v1h-2zM430 230h2v1h-2zM427 248h1v1h-1zM424 244h2v1h-2zM427 235h2v1h-2zM425 249h3v1h-3zM429 236h2v1h-2zM425 229h1v1h-1zM431 244h1v1h-1zM436 242h2v1h-2zM424 249h4v1h-4zM431 229h1v1h-1zM427 249h2v1h-2zM428 238h2v1h-2zM424 243h2v1h-2zM425 248h4v1h-4zM429 254h1v1h-1zM429 255h3v1h-3zM424 264h1v1h-1zM427 260h4v1h-4zM419 270h3v1h-3zM416 257h1v1h-1zM428 257h3v1h-3zM428 257h2v1h-2zM430 258h2v1h-2zM418 270h4v1h-4zM432 260h2v1h-2zM431 257h2v1h-2zM439 267h3v1h-3zM412 263h2v1h-2zM425 269h2v1h-2zM420 271h4v1h-4zM425 270h2v1h-2zM420 266h2v1h-2zM431 271h4v1h-4zM427 254h2v1h-2zM429 262h1v1h-1zM428 272h3v1h-3zM429 272h1v1h-1zM419 267h2v1h-2zM428 261h4v1h-4zM417 259h1v1h-1zM425 263h1v1h-1zM430 269h4v1h-4zM421 261h1v1h-1zM425 255h1v1h-1zM432 266h1v1h-1zM427 267h3v1h-3zM413 261h1v1h-1zM439 262h2v1h-2zM418 270h2v1h-2zM429 259h2v1h-2zM427 282h1v1h-1zM422 287h2v1h-2zM421 293h2v1h-2zM427 298h2v1h-2zM418 296h4v1h-4zM428 288h1v1h-1zM436 295h1v1h-1zM418 292h3v1h-3zM432 292h3v1h-3zM423 291h2v1h-2zM423 293h2v1h-2zM433 286h2v1h-2zM421 281h4v1h-4zM431 299h1v1h-1zM417 293h4v1h-4zM425 293h2v1h-2zM416 287h2v1h-2zM433 282h1v1h-1zM426 292h4v1h-4zM427 287h2v1h-2zM425 289h1v1h-1zM416 291h2v1h-2zM429 281h4v1h-4zM426 280h2v1h-2zM435 295h1v1h-1zM430 282h2v1h-2zM420 288h4v1h-4zM429 293h2v1h-2zM429 295h2v1h-2zM431 293h3v1h-3zM432 281h4v1h-4zM437 289h1v1h-1zM426 292h3v1h-3zM422 284h3v1h-3zM420 287h2v1h-2zM421 295h2v1h-2zM430 286h2v1h-2zM434 291h4v1h-4zM430 308h4v1h-4zM430 308h4v1h-4zM426 323h2v1h-2zM422 318h1v1h-1zM428 325h4v1h-4zM416 318h4v1h-4zM429 315h2v1h-2zM423 319h3v1h-3zM418 313h3v1h-3zM428 320h4v1h-4zM433 312h1v1h-1zM423 304h2v1h-2zM430 323h2v1h-2zM435 319h2v1h-2zM423 324h3v1h-3zM432 314h3v1h-3zM431 310h2v1h-2zM429 316h4v1h-4zM437 322h2v1h-2zM425 325h4v1h-4zM424 323h2v1h-2zM425 309h1v1h-1zM430 314h3v1h-3zM427 315h2v1h-2zM423 307h4v1h-4zM418 308h4v1h-4zM424 308h3v1h-3zM432 307h3v1h-3zM424 316h2v1h-2zM424 324h1v1h-1zM427 308h2v1h-2zM422 314h3v1h-3zM422 319h3v1h-3zM421 315h1v1h-1zM426 325h2v1h-2zM424 316h1v1h-1zM426 304h2v1h-2zM430 307h2v1h-2zM421 316h1v1h-1zM426 317h2v1h-2zM426 343h1v1h-1zM420 342h2v1h-2zM430 349h2v1h-2zM424 343h3v1h-3zM427 337h1v1h-1zM422 335h4v1h-4zM423 342h3v1h-3zM422 331h1v1h-1zM426 340h2v1h-2zM417 348h1v1h-1zM426 351h2v1h-2zM432 349h2v1h-2zM423 329h3v1h-3zM433 341h2v1h-2zM427 334h4v1h-4zM426 330h2v1h-2zM424 338h2v1h-2zM428 329h4v1h-4zM429 330h4v1h-4zM429 351h1v1h-1zM432 344h4v1h-4zM425 344h1v1h-1zM430 341h2v1h-2zM427 332h1v1h-1zM426 349h3v1h-3zM420 329h2v1h-2zM425 338h2v1h-2zM431 347h2v1h-2zM418 331h1v1h-1zM425 331h3v1h-3zM419 345h4v1h-4zM423 332h1v1h-1zM428 343h2v1h-2zM432 338h1v1h-1zM426 350h3v1h-3zM424 337h2v1h-2zM424 329h4v1h-4z" fill="#5a8cf8"/><path d="M429 1h1v1h-1zM421 17h4v1h-4zM424 1h3v1h-3zM421 21h4v1h-4zM430 21h1v1h-1zM429 12h3v1h-3zM425 3h1v1h-1zM424 8h3v1h-3zM429 1h2v1h-2zM425 13h3v1h-3zM423 18h4v1h-4zM429 15h1v1h-1zM430 28h3v1h-3zM424 34h1v1h-1zM420 30h4v1h-4zM428 32h1v1h-1zM428 31h4v1h-4zM424 32h1v1h-1zM423 42h2v1h-2zM423 34h1v1h-1zM422 32h1v1h-1zM429 43h1v1h-1zM421 34h2v1h-2zM433 37h2v1h-2zM428 27h1v1h-1zM423 39h4v1h-4zM423 44h4v1h-4zM421 35h3v1h-3zM426 26h1v1h-1zM421 36h1v1h-1zM430 58h2v1h-2zM426 55h3v1h-3zM426 69h4v1h-4zM426 71h2v1h-2zM429 51h2v1h-2zM425 68h3v1h-3zM425 67h2v1h-2zM427 51h2v1h-2zM425 96h2v1h-2zM427 95h3v1h-3zM420 77h4v1h-4zM423 77h2v1h-2zM432 80h2v1h-2zM424 92h4v1h-4zM426 80h4v1h-4zM422 88h4v1h-4zM427 94h1v1h-1zM428 79h4v1h-4zM425 95h4v1h-4zM425 96h1v1h-1zM429 96h1v1h-1zM430 85h2v1h-2zM431 81h2v1h-2zM430 96h1v1h-1zM425 105h2v1h-2zM425 120h2v1h-2zM423 104h1v1h-1zM423 109h2v1h-2zM423 123h4v1h-4zM429 100h2v1h-2zM426 109h3v1h-3zM429 121h2v1h-2zM426 110h2v1h-2zM428 107h4v1h-4zM428 123h1v1h-1zM424 124h4v1h-4zM428 104h2v1h-2zM428 119h2v1h-2zM430 119h2v1h-2zM425 100h3v1h-3zM428 114h2v1h-2zM428 113h4v1h-4zM424 119h4v1h-4zM420 131h3v1h-3zM426 147h2v1h-2zM425 147h3v1h-3zM422 135h2v1h-2zM426 130h2v1h-2zM428 146h2v1h-2zM427 135h2v1h-2zM429 143h1v1h-1zM423 143h2v1h-2zM427 166h3v1h-3zM429 161h2v1h-2zM428 157h2v1h-2zM423 151h4v1h-4zM425 166h3v1h-3zM427 161h3v1h-3zM427 156h1v1h-1zM430 173h4v1h-4zM425 159h3v1h-3zM429 171h2v1h-2zM428 151h2v1h-2zM427 183h1v1h-1zM425 188h3v1h-3zM425 188h4v1h-4zM424 195h4v1h-4zM423 179h2v1h-2zM424 181h2v1h-2zM423 181h2v1h-2zM423 178h2v1h-2zM428 178h4v1h-4zM429 179h4v1h-4zM427 198h1v1h-1zM423 182h2v1h-2zM428 204h2v1h-2zM429 212h2v1h-2zM424 222h4v1h-4zM429 207h4v1h-4zM429 206h2v1h-2zM431 218h2v1h-2zM428 206h2v1h-2zM425 214h2v1h-2zM422 202h4v1h-4zM428 223h1v1h-1zM428 210h3v1h-3zM425 224h2v1h-2zM430 222h2v1h-2zM427 220h1v1h-1zM431 214h1v1h-1zM430 222h4v1h-4zM424 218h1v1h-1zM422 205h3v1h-3zM428 221h1v1h-1zM423 247h1v1h-1zM425 246h2v1h-2zM428 247h3v1h-3zM425 238h2v1h-2zM428 241h3v1h-3zM424 232h2v1h-2zM423 229h2v1h-2zM427 234h2v1h-2zM425 241h1v1h-1zM424 236h3v1h-3zM428 248h2v1h-2zM426 242h2v1h-2zM422 248h4v1h-4zM429 231h3v1h-3zM422 260h2v1h-2zM423 266h4v1h-4zM426 272h1v1h-1zM427 255h2v1h-2zM431 269h2v1h-2zM428 257h3v1h-3zM422 265h4v1h-4zM421 254h4v1h-4zM427 260h3v1h-3zM426 263h1v1h-1zM421 273h3v1h-3zM433 272h2v1h-2zM432 264h2v1h-2zM421 258h1v1h-1zM422 269h2v1h-2zM427 284h4v1h-4zM426 292h2v1h-2zM422 289h2v1h-2zM427 280h1v1h-1zM427 288h1v1h-1zM431 282h3v1h-3zM431 285h3v1h-3zM433 281h1v1h-1zM421 280h3v1h-3zM426 293h1v1h-1zM423 283h2v1h-2zM428 298h4v1h-4zM421 289h2v1h-2zM423 280h2v1h-2zM427 319h1v1h-1zM428 319h2v1h-2zM428 315h3v1h-3zM429 315h2v1h-2zM423 312h1v1h-1zM424 312h2v1h-2zM429 307h1v1h-1zM424 322h1v1h-1zM425 309h2v1h-2zM422 310h2v1h-2zM426 311h4v1h-4zM427 318h3v1h-3zM428 315h2v1h-2zM430 311h2v1h-2zM423 334h3v1h-3zM423 331h3v1h-3zM428 336h4v1h-4zM428 350h1v1h-1zM427 337h2v1h-2zM430 340h3v1h-3zM424 338h3v1h-3zM421 351h4v1h-4zM423 350h2v1h-2zM427 350h2v1h-2zM423 349h1v1h-1zM423 347h4v1h-4zM426 342h4v1h-4zM429 329h4v1h-4z" fill="#a0c4ff"/><rect x="426.5" width="2" height="351" fill="#5a9aff" opacity="0.3"/><rect x="426.0" y="0" width="3" height="75" fill="#80b8ff" opacity="0.55"/><path d="M426.3 -3.5h2.4v2.9h-2.4zM426.3 47.4h2.4v2.5h-2.4zM426.3 72.6h2.4v2.6h-2.4zM426.3 97.4h2.4v3.6h-2.4zM426.3 122.6h2.4v3.8h-2.4zM426.3 147.9h2.4v3.7h-2.4zM426.3 173.7h2.4v2.8h-2.4zM426.3 224.2h2.4v3.0h-2.4zM426.3 249.0h2.4v3.9h-2.4zM426.3 275.0h2.4v2.6h-2.4z" fill="#eef2b8"/><rect x="590.3" width="10" height="351" fill="rgba(40,70,220,0.10)"/><path d="M595.3 0V351" stroke="#4a70f0" stroke-width="1.6" stroke-dasharray="1 2 2 3" opacity="0.75"/><path d="M595.3 0V351" stroke="#b0d0ff" stroke-width="1.2" stroke-dasharray="1 7 2 9" opacity="0.8"/><path d="M594.3 98.6h2.2v6.0h-2.2zM594.3 155.9h2.2v6.0h-2.2zM594.3 291.4h2.2v12.0h-2.2zM594.3 346.4h2.2v6.0h-2.2z" fill="#d8ecff"/><path d="M594.3 5.0h2.2v1.5h-2.2zM594.3 33.2h2.2v1.5h-2.2zM594.3 55.4h2.2v1.5h-2.2zM594.3 78.8h2.2v3.0h-2.2zM594.3 119.3h2.2v2.0h-2.2zM594.3 196.8h2.2v1.5h-2.2zM594.3 228.0h2.2v2.0h-2.2zM594.3 252.6h2.2v1.5h-2.2zM594.3 270.7h2.2v3.0h-2.2zM594.3 325.1h2.2v2.0h-2.2z" fill="#6a9cff"/></svg><div class="t" style="left:1235.5px;top:60.5px;color:#1b1b1b;font-size:12.5px;"><span class="c">缩放</span></div><div style="left:1238px;top:79px;width:20px;height:149.5px;background:#c8c8c8;"></div><div style="left:1240px;top:217px;width:16.25px;height:10px;background:#3d84de;"></div><div class="t" style="left:1235.5px;top:254.0px;color:#1b1b1b;font-size:12.5px;"><span class="c">最大</span></div><div style="left:1238px;top:273px;width:20px;height:149.5px;background:#c8c8c8;"></div><div style="left:1240px;top:393px;width:16.25px;height:10px;background:#3d84de;"></div><div class="t" style="left:1235.5px;top:449.0px;color:#1b1b1b;font-size:12.5px;"><span class="c">最小</span></div><div style="left:1238px;top:467px;width:20px;height:149.20000000000005px;background:#c8c8c8;"></div><div style="left:1240px;top:533.6px;width:16.25px;height:10px;background:#3d84de;"></div>
</body></html>
